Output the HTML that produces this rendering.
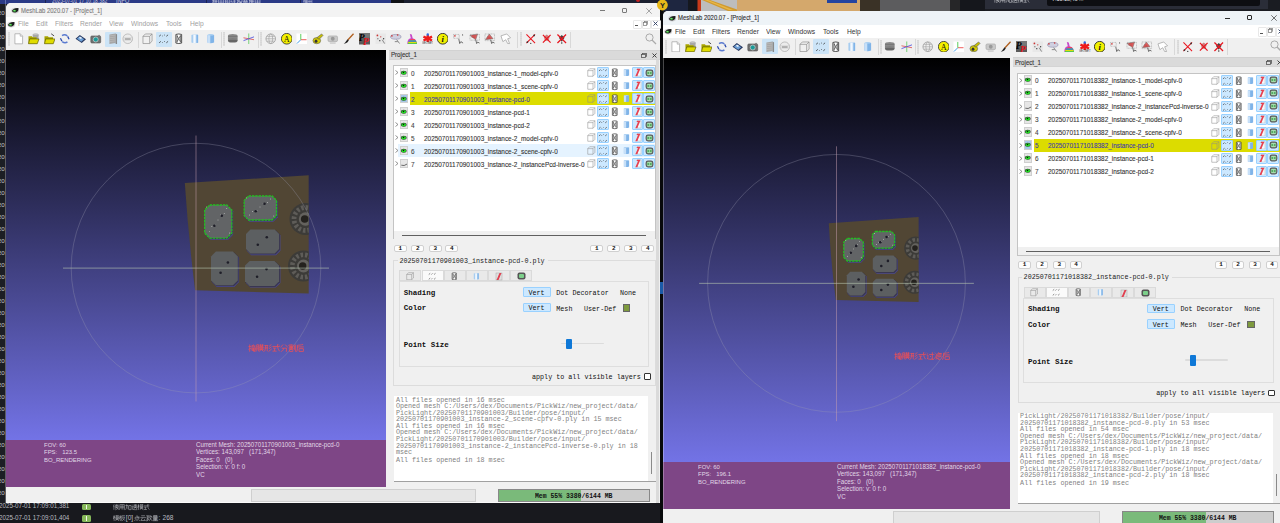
<!DOCTYPE html><html><head><meta charset="utf-8"><style>html,body{margin:0;padding:0;width:1280px;height:523px;overflow:hidden;background:#17191e;position:relative}.s,.m{position:absolute;white-space:pre}.s{font-family:"Liberation Sans", sans-serif}.m{font-family:"Liberation Mono", monospace}svg{display:block}</style></head><body>
<div style="position:absolute;left:0px;top:0px;width:391px;height:4px;background:#2b3a86;"></div>
<div style="position:absolute;left:391px;top:0px;width:13px;height:4px;background:#101216;"></div>
<div style="position:absolute;left:404px;top:0px;width:259px;height:4px;background:#1b2030;"></div>
<div class="s" style="left:52px;top:-3.43px;height:8.45px;line-height:8.45px;font-size:6.5px;color:#c8cbe0;font-weight:normal;transform:scaleX(0.76);transform-origin:0 0;">2025-07-01 17:10:18,382</div>
<div style="position:absolute;left:44.5px;top:0px;width:0.8px;height:4px;background:#1c2450;"></div>
<div style="position:absolute;left:206px;top:0px;width:0.8px;height:4px;background:#1c2450;"></div>
<div style="position:absolute;left:300px;top:0px;width:0.8px;height:4px;background:#1c2450;"></div>
<div class="s" style="left:116px;top:-3.43px;height:8.45px;line-height:8.45px;font-size:6.5px;color:#c8cbe0;font-weight:normal;transform:scaleX(0.85);transform-origin:0 0;">INFO</div>
<svg style="position:absolute;left:212px;top:-1.5px" width="50" height="7"><path transform="translate(0.00,0) scale(0.968)" d="M0.3 1.5h2M1.3 0.3v5.7M0.2 3.5l2-1M2.8 1h3M2.8 2.8h3M4.3 0.3v5.7M3 4.6h2.8M3 1v4" stroke="#c8cbe0" stroke-width="0.62" fill="none"/><path transform="translate(6.10,0) scale(0.968)" d="M0.5 0.8h5M0.5 0.8v5.2M5.5 0.8v5.2M0.5 3.2h5M0.5 5.4h5M3 0.8v5.2" stroke="#c8cbe0" stroke-width="0.62" fill="none"/><path transform="translate(12.20,0) scale(0.968)" d="M0.3 1h2.2M1.5 0.3v5.5M0.3 3h2.5M3.2 0.8h2.6v5M3.2 0.8v5M3.2 3.2h2.6M3.2 5.5h2.6" stroke="#c8cbe0" stroke-width="0.62" fill="none"/><path transform="translate(18.30,0) scale(0.968)" d="M0.5 0.5l1 1M0.3 2.5h1.5v3M2.5 1h3.3M4.2 0.3v5.7M2.5 3h3.3M2.8 5.5h3" stroke="#c8cbe0" stroke-width="0.62" fill="none"/><path transform="translate(24.40,0) scale(0.968)" d="M0.3 1.2h2.4M1.5 0.3v5.5M0.2 4l2.5-1.5M3 0.6h2.8v2.3H3zM3 3.6h2.8M4.4 2.9v3M3 5.6h2.9" stroke="#c8cbe0" stroke-width="0.62" fill="none"/><path transform="translate(30.50,0) scale(0.968)" d="M0.4 1h5.2M0.4 2.6h5.2M2 0.3v2.5M4 0.3v2.5M0.8 3.8h4.4v2H0.8zM3 3.8v2" stroke="#c8cbe0" stroke-width="0.62" fill="none"/><path transform="translate(36.60,0) scale(0.968)" d="M0.3 1.5h2M1.3 0.3v5.7M0.2 3.5l2-1M2.8 1h3M2.8 2.8h3M4.3 0.3v5.7M3 4.6h2.8M3 1v4" stroke="#c8cbe0" stroke-width="0.62" fill="none"/><path transform="translate(42.70,0) scale(0.968)" d="M0.5 0.8h5M0.5 0.8v5.2M5.5 0.8v5.2M0.5 3.2h5M0.5 5.4h5M3 0.8v5.2" stroke="#c8cbe0" stroke-width="0.62" fill="none"/></svg>
<svg style="position:absolute;left:303px;top:-1.0px" width="10" height="6"><path transform="translate(0.00,0) scale(0.806)" d="M0.3 1.5h2M1.3 0.3v5.7M0.2 3.5l2-1M2.8 1h3M2.8 2.8h3M4.3 0.3v5.7M3 4.6h2.8M3 1v4" stroke="#c8cbe0" stroke-width="0.62" fill="none"/><path transform="translate(4.50,0) scale(0.806)" d="M0.5 0.8h5M0.5 0.8v5.2M5.5 0.8v5.2M0.5 3.2h5M0.5 5.4h5M3 0.8v5.2" stroke="#c8cbe0" stroke-width="0.62" fill="none"/></svg>
<div style="position:absolute;left:5px;top:0px;width:1px;height:4px;background:#6070b0;"></div>
<div style="position:absolute;left:636px;top:0px;width:4px;height:2px;background:#c02020;border-radius:0 0 2px 2px;"></div>
<div style="position:absolute;left:0px;top:4px;width:6px;height:500px;background:#1c1e24;"></div>
<div class="s" style="left:-2.2px;top:8.97px;height:8.06px;line-height:8.06px;font-size:6.2px;color:#c4c6cc;font-weight:normal;">20</div>
<div class="s" style="left:-2.2px;top:20.97px;height:8.06px;line-height:8.06px;font-size:6.2px;color:#c4c6cc;font-weight:normal;">20</div>
<div class="s" style="left:-2.2px;top:32.97px;height:8.06px;line-height:8.06px;font-size:6.2px;color:#c4c6cc;font-weight:normal;">20</div>
<div class="s" style="left:-2.2px;top:44.97px;height:8.06px;line-height:8.06px;font-size:6.2px;color:#c4c6cc;font-weight:normal;">20</div>
<div class="s" style="left:-2.2px;top:56.97px;height:8.06px;line-height:8.06px;font-size:6.2px;color:#c4c6cc;font-weight:normal;">20</div>
<div class="s" style="left:-2.2px;top:68.97px;height:8.06px;line-height:8.06px;font-size:6.2px;color:#c4c6cc;font-weight:normal;">20</div>
<div class="s" style="left:-2.2px;top:80.97px;height:8.06px;line-height:8.06px;font-size:6.2px;color:#c4c6cc;font-weight:normal;">20</div>
<div class="s" style="left:-2.2px;top:92.97px;height:8.06px;line-height:8.06px;font-size:6.2px;color:#c4c6cc;font-weight:normal;">20</div>
<div class="s" style="left:-2.2px;top:104.97px;height:8.06px;line-height:8.06px;font-size:6.2px;color:#c4c6cc;font-weight:normal;">20</div>
<div class="s" style="left:-2.2px;top:116.97px;height:8.06px;line-height:8.06px;font-size:6.2px;color:#c4c6cc;font-weight:normal;">20</div>
<div class="s" style="left:-2.2px;top:128.97px;height:8.06px;line-height:8.06px;font-size:6.2px;color:#c4c6cc;font-weight:normal;">20</div>
<div class="s" style="left:-2.2px;top:140.97px;height:8.06px;line-height:8.06px;font-size:6.2px;color:#c4c6cc;font-weight:normal;">20</div>
<div class="s" style="left:-2.2px;top:152.97px;height:8.06px;line-height:8.06px;font-size:6.2px;color:#c4c6cc;font-weight:normal;">20</div>
<div class="s" style="left:-2.2px;top:164.97px;height:8.06px;line-height:8.06px;font-size:6.2px;color:#c4c6cc;font-weight:normal;">20</div>
<div class="s" style="left:-2.2px;top:176.97px;height:8.06px;line-height:8.06px;font-size:6.2px;color:#c4c6cc;font-weight:normal;">20</div>
<div class="s" style="left:-2.2px;top:188.97px;height:8.06px;line-height:8.06px;font-size:6.2px;color:#c4c6cc;font-weight:normal;">20</div>
<div class="s" style="left:-2.2px;top:200.97px;height:8.06px;line-height:8.06px;font-size:6.2px;color:#c4c6cc;font-weight:normal;">20</div>
<div class="s" style="left:-2.2px;top:212.97px;height:8.06px;line-height:8.06px;font-size:6.2px;color:#c4c6cc;font-weight:normal;">20</div>
<div class="s" style="left:-2.2px;top:224.97px;height:8.06px;line-height:8.06px;font-size:6.2px;color:#c4c6cc;font-weight:normal;">20</div>
<div class="s" style="left:-2.2px;top:236.97px;height:8.06px;line-height:8.06px;font-size:6.2px;color:#c4c6cc;font-weight:normal;">20</div>
<div class="s" style="left:-2.2px;top:248.97px;height:8.06px;line-height:8.06px;font-size:6.2px;color:#c4c6cc;font-weight:normal;">20</div>
<div class="s" style="left:-2.2px;top:260.97px;height:8.06px;line-height:8.06px;font-size:6.2px;color:#c4c6cc;font-weight:normal;">20</div>
<div class="s" style="left:-2.2px;top:272.97px;height:8.06px;line-height:8.06px;font-size:6.2px;color:#c4c6cc;font-weight:normal;">20</div>
<div class="s" style="left:-2.2px;top:284.97px;height:8.06px;line-height:8.06px;font-size:6.2px;color:#c4c6cc;font-weight:normal;">20</div>
<div class="s" style="left:-2.2px;top:296.97px;height:8.06px;line-height:8.06px;font-size:6.2px;color:#c4c6cc;font-weight:normal;">20</div>
<div class="s" style="left:-2.2px;top:308.97px;height:8.06px;line-height:8.06px;font-size:6.2px;color:#c4c6cc;font-weight:normal;">20</div>
<div class="s" style="left:-2.2px;top:320.97px;height:8.06px;line-height:8.06px;font-size:6.2px;color:#c4c6cc;font-weight:normal;">20</div>
<div class="s" style="left:-2.2px;top:332.97px;height:8.06px;line-height:8.06px;font-size:6.2px;color:#c4c6cc;font-weight:normal;">20</div>
<div class="s" style="left:-2.2px;top:344.97px;height:8.06px;line-height:8.06px;font-size:6.2px;color:#c4c6cc;font-weight:normal;">20</div>
<div class="s" style="left:-2.2px;top:356.97px;height:8.06px;line-height:8.06px;font-size:6.2px;color:#c4c6cc;font-weight:normal;">20</div>
<div class="s" style="left:-2.2px;top:368.97px;height:8.06px;line-height:8.06px;font-size:6.2px;color:#c4c6cc;font-weight:normal;">20</div>
<div class="s" style="left:-2.2px;top:380.97px;height:8.06px;line-height:8.06px;font-size:6.2px;color:#c4c6cc;font-weight:normal;">20</div>
<div class="s" style="left:-2.2px;top:392.97px;height:8.06px;line-height:8.06px;font-size:6.2px;color:#c4c6cc;font-weight:normal;">20</div>
<div class="s" style="left:-2.2px;top:404.97px;height:8.06px;line-height:8.06px;font-size:6.2px;color:#c4c6cc;font-weight:normal;">20</div>
<div class="s" style="left:-2.2px;top:416.97px;height:8.06px;line-height:8.06px;font-size:6.2px;color:#c4c6cc;font-weight:normal;">20</div>
<div class="s" style="left:-2.2px;top:428.97px;height:8.06px;line-height:8.06px;font-size:6.2px;color:#c4c6cc;font-weight:normal;">20</div>
<div class="s" style="left:-2.2px;top:440.97px;height:8.06px;line-height:8.06px;font-size:6.2px;color:#c4c6cc;font-weight:normal;">20</div>
<div class="s" style="left:-2.2px;top:452.97px;height:8.06px;line-height:8.06px;font-size:6.2px;color:#c4c6cc;font-weight:normal;">20</div>
<div class="s" style="left:-2.2px;top:464.97px;height:8.06px;line-height:8.06px;font-size:6.2px;color:#c4c6cc;font-weight:normal;">20</div>
<div class="s" style="left:-2.2px;top:476.97px;height:8.06px;line-height:8.06px;font-size:6.2px;color:#c4c6cc;font-weight:normal;">20</div>
<div class="s" style="left:-2.2px;top:488.97px;height:8.06px;line-height:8.06px;font-size:6.2px;color:#c4c6cc;font-weight:normal;">20</div>
<div style="position:absolute;left:5px;top:4px;width:1px;height:499px;background:#9a9ca4;opacity:0.5;"></div>
<div style="position:absolute;left:0px;top:503px;width:663px;height:20px;background:#18191e;"></div>
<div class="s" style="left:-1.5px;top:502.31px;height:8.58px;line-height:8.58px;font-size:6.6px;color:#b8bac0;font-weight:normal;transform:scaleX(0.95);transform-origin:0 0;">2025-07-01 17:09:01,381</div>
<div style="position:absolute;left:82px;top:504px;width:8.6px;height:5.7px;background:#86b85a;border-radius:1.5px;"></div>
<div style="position:absolute;left:85.8px;top:505px;width:1px;height:3.7px;background:#f0f6e8;"></div>
<div class="s" style="left:-1.5px;top:514.11px;height:8.58px;line-height:8.58px;font-size:6.6px;color:#b8bac0;font-weight:normal;transform:scaleX(0.95);transform-origin:0 0;">2025-07-01 17:09:01,404</div>
<div style="position:absolute;left:82px;top:514.5px;width:8.6px;height:7.5px;background:#86b85a;border-radius:1.5px;"></div>
<div style="position:absolute;left:85.8px;top:515.5px;width:1px;height:5.5px;background:#f0f6e8;"></div>
<svg style="position:absolute;left:113.3px;top:503.6px" width="39" height="7"><path transform="translate(0.00,0) scale(0.750)" d="M1.5 0.5l-1.2 3M1.2 2.5v5.3M2.5 1.5h5.3M5 0.3v4.5M3 2.5h4v2h-4zM3 6l2-1.5 2.5 3M7.5 5.5l-4.5 2.3" stroke="#b0b2b8" stroke-width="0.75" fill="none"/><path transform="translate(6.10,0) scale(0.750)" d="M1 0.8h6v6.7l-0.8-0.3M1 0.8v4c0 1.5-0.3 2.5-0.8 3M1 3h6M1 5h6M4 0.8v6.8" stroke="#b0b2b8" stroke-width="0.75" fill="none"/><path transform="translate(12.20,0) scale(0.750)" d="M0.3 2h3.5v5M2 0.3v2.5c0 2-0.8 4-1.7 5M4.8 2h3v5.5h-3z" stroke="#b0b2b8" stroke-width="0.75" fill="none"/><path transform="translate(18.30,0) scale(0.750)" d="M3 1.3h4.8M5.3 0.3v5M3.3 2.5h4v2h-4zM3 6.5l2.3-2 2.5 2M0.8 0.8l0.8 0.7M0.3 3h1.5v3l-1 1M0.8 6.5c1.5 1 4 1.2 7.2 1" stroke="#b0b2b8" stroke-width="0.75" fill="none"/><path transform="translate(24.40,0) scale(0.750)" d="M0.3 2.3h2.5M1.5 0.3v7.5M1.5 2.5l-1.2 3M1.5 3l1 1.2M3.3 1.2h4.5M4.5 0.3v1.8M6.6 0.3v1.8M3.8 2.6h3.4v2.2h-3.4zM3.8 3.7h3.4M3.3 5.7h4.5M5.5 4.8l-2 2.9M5.5 5.7l2.3 2" stroke="#b0b2b8" stroke-width="0.75" fill="none"/><path transform="translate(30.50,0) scale(0.750)" d="M0.3 2.5h7.5M5.5 0.3c0 3 0.5 5.5 2.3 7.2M6.8 0.6l0.8 0.8M0.8 4.2h3.4M2.5 4.2v3M0.3 7.3h4.3" stroke="#b0b2b8" stroke-width="0.75" fill="none"/></svg>
<svg style="position:absolute;left:113.3px;top:515.4px" width="14" height="7"><path transform="translate(0.00,0) scale(0.750)" d="M0.3 2.3h2.5M1.5 0.3v7.5M1.5 2.5l-1.2 3M1.5 3l1 1.2M3.3 1.2h4.5M4.5 0.3v1.8M6.6 0.3v1.8M3.8 2.6h3.4v2.2h-3.4zM3.8 3.7h3.4M3.3 5.7h4.5M5.5 4.8l-2 2.9M5.5 5.7l2.3 2" stroke="#b0b2b8" stroke-width="0.75" fill="none"/><path transform="translate(6.10,0) scale(0.750)" d="M0.3 2.3h2.5M1.5 0.3v7.5M1.5 2.5l-1.2 3M1.5 3l1 1.2M3.5 1h4.3M3.5 1v3.5c0 1.5-0.5 2.7-1 3.3M4 3h3.5c-0.5 2-2 3.8-3.8 4.8M4.5 4l3.3 3.5" stroke="#b0b2b8" stroke-width="0.75" fill="none"/></svg>
<div class="s" style="left:125.8px;top:514.11px;height:8.58px;line-height:8.58px;font-size:6.6px;color:#b8bac0;font-weight:normal;">[0]</div>
<svg style="position:absolute;left:134px;top:515.4px" width="26" height="7"><path transform="translate(0.00,0) scale(0.750)" d="M4 0.3v2.5h3.5M1.5 3h5v2.5h-5zM0.5 6.8l0.5 1M2.8 6.8l0.3 1M4.8 6.8l0.3 1M7 6.8l0.7 1" stroke="#b0b2b8" stroke-width="0.75" fill="none"/><path transform="translate(6.10,0) scale(0.750)" d="M1.5 1h5M0.3 3.5h7.5M3.5 3.5l-2.5 3.8h6M5.5 5.5l1.5 2" stroke="#b0b2b8" stroke-width="0.75" fill="none"/><path transform="translate(12.20,0) scale(0.750)" d="M0.5 1.5h3.5M2.2 0.3v3.5M0.5 0.5l0.8 1M4 0.5l-0.8 1M0.3 3.8h4M2 4l-1.5 3.8M0.8 5.5h3c-0.5 1.3-2 2.2-3.3 2.5M5.5 0.3l-1 3M5 1.8h2.8M7 1.8c-0.5 2.5-1.5 4.5-3 6M4.8 3.5l3 4.3" stroke="#b0b2b8" stroke-width="0.75" fill="none"/><path transform="translate(18.30,0) scale(0.750)" d="M1.8 0.5h4.5v2h-4.5zM1.8 1.5h4.5M0.3 3h7.5M1.8 3.8h4.5v2h-4.5zM1.8 4.8h4.5M4 3.8v4M1 6.5h6M0.3 7.6h7.5" stroke="#b0b2b8" stroke-width="0.75" fill="none"/></svg>
<div class="s" style="left:158.5px;top:514.11px;height:8.58px;line-height:8.58px;font-size:6.6px;color:#b8bac0;font-weight:normal;">:</div>
<div class="s" style="left:162.5px;top:514.11px;height:8.58px;line-height:8.58px;font-size:6.6px;color:#b8bac0;font-weight:normal;">268</div>
<div style="position:absolute;left:660px;top:0px;width:3px;height:523px;background:#08090b;"></div>
<div style="position:absolute;left:660px;top:282px;width:3px;height:12px;background:#1a5aa8;"></div>
<div style="position:absolute;left:663px;top:0px;width:617px;height:11px;background:#1e2640;"></div>
<div style="position:absolute;left:687.5px;top:0px;width:10px;height:11px;background:#15181f;"></div>
<svg style="position:absolute;left:697px;top:0" width="263" height="11"><path d="M0.5 0h5v11h-5z" fill="#c83a1a"/><path d="M4 0h36v11h-36z" fill="#bdbdbd"/><path d="M5 0h8l27 9.5v1.5h-9z" fill="#d09a30"/><path d="M8 0h3l25 10h-4z" fill="#e8b848"/><path d="M40 0h123v11h-123z" fill="#d4a86c"/><path d="M130 0h30v3h-30z" fill="#2444a0"/><path d="M163 0h20v11h-20z" fill="#3a3226"/><path d="M183 0h70v11h-70z" fill="#5c5c5e"/><path d="M253 0h10v11h-10z" fill="#262628"/></svg>
<div style="position:absolute;left:960px;top:0px;width:25px;height:11px;background:#15171c;"></div>
<div style="position:absolute;left:985px;top:0px;width:295px;height:11px;background:#2a2d38;"></div>
<div style="position:absolute;left:1047px;top:0px;width:213px;height:5.5px;background:#0d0e12;border-radius:0 0 2px 2px;"></div>
<div style="position:absolute;left:1268px;top:0px;width:12px;height:11px;background:#1a1c22;"></div>
<div style="position:absolute;left:985px;top:9px;width:295px;height:2px;background:#1a1c22;"></div>
<svg style="position:absolute;left:994px;top:-2.6px" width="37" height="7"><path transform="translate(0.00,0) scale(0.725)" d="M1.5 0.5l-1.2 3M1.2 2.5v5.3M2.5 1.5h5.3M5 0.3v4.5M3 2.5h4v2h-4zM3 6l2-1.5 2.5 3M7.5 5.5l-4.5 2.3" stroke="#c0c2c8" stroke-width="0.8" fill="none"/><path transform="translate(5.90,0) scale(0.725)" d="M1 0.8h6v6.7l-0.8-0.3M1 0.8v4c0 1.5-0.3 2.5-0.8 3M1 3h6M1 5h6M4 0.8v6.8" stroke="#c0c2c8" stroke-width="0.8" fill="none"/><path transform="translate(11.80,0) scale(0.725)" d="M0.3 2h3.5v5M2 0.3v2.5c0 2-0.8 4-1.7 5M4.8 2h3v5.5h-3z" stroke="#c0c2c8" stroke-width="0.8" fill="none"/><path transform="translate(17.70,0) scale(0.725)" d="M3 1.3h4.8M5.3 0.3v5M3.3 2.5h4v2h-4zM3 6.5l2.3-2 2.5 2M0.8 0.8l0.8 0.7M0.3 3h1.5v3l-1 1M0.8 6.5c1.5 1 4 1.2 7.2 1" stroke="#c0c2c8" stroke-width="0.8" fill="none"/><path transform="translate(23.60,0) scale(0.725)" d="M0.3 2.3h2.5M1.5 0.3v7.5M1.5 2.5l-1.2 3M1.5 3l1 1.2M3.3 1.2h4.5M4.5 0.3v1.8M6.6 0.3v1.8M3.8 2.6h3.4v2.2h-3.4zM3.8 3.7h3.4M3.3 5.7h4.5M5.5 4.8l-2 2.9M5.5 5.7l2.3 2" stroke="#c0c2c8" stroke-width="0.8" fill="none"/><path transform="translate(29.50,0) scale(0.725)" d="M0.3 2.5h7.5M5.5 0.3c0 3 0.5 5.5 2.3 7.2M6.8 0.6l0.8 0.8M0.8 4.2h3.4M2.5 4.2v3M0.3 7.3h4.3" stroke="#c0c2c8" stroke-width="0.8" fill="none"/></svg>
<div class="s" style="left:1052px;top:-3.70px;height:7.80px;line-height:7.80px;font-size:6px;color:#e8e8ec;font-weight:normal;transform:scaleX(0.9);transform-origin:0 0;">7:10:18,43 ...</div>
<div style="position:absolute;left:6px;top:3px;width:654px;height:500px;background:#f0f0f0;border-radius:5px 5px 0 0;overflow:hidden;"></div>
<div style="position:absolute;left:6px;top:3px;width:654px;height:14px;background:#f3f3f3;border-radius:5px 5px 0 0;"></div>
<svg style="position:absolute;left:10.6px;top:6.2px" width="8.5" height="8.5" viewBox="0 0 12 12"><ellipse cx="6" cy="6.5" rx="5.6" ry="4" fill="#aaa" opacity="0.45"/><path d="M1.2 7 Q4 2.2 10.8 3 Q11 7 7.5 8.8 Q3.5 10 1.2 7Z" fill="#1e1e1e"/><ellipse cx="5" cy="6.8" rx="2.2" ry="1.4" fill="#3fbf3f"/><ellipse cx="4.5" cy="6.6" rx="0.9" ry="0.6" fill="#b8f0b8"/></svg>
<div class="s" style="left:20.5px;top:5.96px;height:9.88px;line-height:9.88px;font-size:7.6px;color:#7a7a7a;font-weight:normal;transform:scaleX(0.78);transform-origin:0 0;-webkit-text-stroke:0.12px #7a7a7a;">MeshLab 2020.07 - [Project_1]</div>
<div style="position:absolute;left:599.5px;top:10px;width:5.5px;height:0.8px;background:#7a7a7a;"></div>
<div style="position:absolute;left:622.2px;top:7.6px;width:5.2px;height:5.2px;border:0.6px solid #7a7a7a;border-radius:1px;box-sizing:border-box;"></div>
<svg style="position:absolute;left:645.5px;top:7.5px;" width="6" height="6" viewBox="0 0 6 6"><path d="M0.3 0.3L5.7 5.7M5.7 0.3L0.3 5.7" stroke="#7a7a7a" stroke-width="0.65"/></svg>
<div style="position:absolute;left:6px;top:17px;width:654px;height:13px;background:#fff;"></div>
<svg style="position:absolute;left:7.1px;top:19.6px" width="8.5" height="8.5" viewBox="0 0 12 12"><ellipse cx="6" cy="6.5" rx="5.6" ry="4" fill="#aaa" opacity="0.45"/><path d="M1.2 7 Q4 2.2 10.8 3 Q11 7 7.5 8.8 Q3.5 10 1.2 7Z" fill="#1e1e1e"/><ellipse cx="5" cy="6.8" rx="2.2" ry="1.4" fill="#3fbf3f"/><ellipse cx="4.5" cy="6.6" rx="0.9" ry="0.6" fill="#b8f0b8"/></svg>
<div class="s" style="left:17.9px;top:19.32px;height:9.36px;line-height:9.36px;font-size:7.2px;color:#a0a0a0;font-weight:normal;transform:scaleX(0.93);transform-origin:0 0;">File</div>
<div class="s" style="left:35.6px;top:19.32px;height:9.36px;line-height:9.36px;font-size:7.2px;color:#a0a0a0;font-weight:normal;transform:scaleX(0.93);transform-origin:0 0;">Edit</div>
<div class="s" style="left:54.7px;top:19.32px;height:9.36px;line-height:9.36px;font-size:7.2px;color:#a0a0a0;font-weight:normal;transform:scaleX(0.93);transform-origin:0 0;">Filters</div>
<div class="s" style="left:80px;top:19.32px;height:9.36px;line-height:9.36px;font-size:7.2px;color:#a0a0a0;font-weight:normal;transform:scaleX(0.93);transform-origin:0 0;">Render</div>
<div class="s" style="left:109px;top:19.32px;height:9.36px;line-height:9.36px;font-size:7.2px;color:#a0a0a0;font-weight:normal;transform:scaleX(0.93);transform-origin:0 0;">View</div>
<div class="s" style="left:131px;top:19.32px;height:9.36px;line-height:9.36px;font-size:7.2px;color:#a0a0a0;font-weight:normal;transform:scaleX(0.93);transform-origin:0 0;">Windows</div>
<div class="s" style="left:166px;top:19.32px;height:9.36px;line-height:9.36px;font-size:7.2px;color:#a0a0a0;font-weight:normal;transform:scaleX(0.93);transform-origin:0 0;">Tools</div>
<div class="s" style="left:190px;top:19.32px;height:9.36px;line-height:9.36px;font-size:7.2px;color:#a0a0a0;font-weight:normal;transform:scaleX(0.93);transform-origin:0 0;">Help</div>
<div style="position:absolute;left:632.7px;top:19.6px;width:7.5px;height:7.5px;background:#fff;border:0.5px solid #e8e8e8;border-radius:1px;"></div>
<div style="position:absolute;left:641.6px;top:19.6px;width:7.5px;height:7.5px;background:#fff;border:0.5px solid #e8e8e8;border-radius:1px;"></div>
<div style="position:absolute;left:651.3px;top:19.6px;width:7.5px;height:7.5px;background:#fff;border:0.5px solid #e8e8e8;border-radius:1px;"></div>
<div style="position:absolute;left:634.7px;top:25.2px;width:3px;height:0.8px;background:#555;"></div>
<svg style="position:absolute;left:643.1px;top:20.9px;" width="5" height="5" viewBox="0 0 5 5"><rect x="1.3" y="0.5" width="3.2" height="3" fill="none" stroke="#777" stroke-width="0.7"/><rect x="0.5" y="1.5" width="3.2" height="3" fill="#fff" stroke="#777" stroke-width="0.7"/></svg>
<svg style="position:absolute;left:652.9px;top:21px;" width="5" height="5" viewBox="0 0 5 5"><path d="M0.5 0.5L4.5 4.5M4.5 0.5L0.5 4.5" stroke="#2a3a60" stroke-width="0.9"/></svg>
<div style="position:absolute;left:6px;top:30px;width:654px;height:20px;background:#f0f0f0;"></div>
<svg style="position:absolute;left:12.75px;top:33.4px" width="11.5" height="11.5" viewBox="0 0 12 12"><path d="M2 0.8h5.5l2.5 2.5v8h-8z" fill="#fff" stroke="#9a9a9a" stroke-width="0.7"/><path d="M7.5 0.8v2.5h2.5" fill="#e8e8e8" stroke="#9a9a9a" stroke-width="0.6"/></svg>
<svg style="position:absolute;left:28.25px;top:33.4px" width="11.5" height="11.5" viewBox="0 0 12 12"><ellipse cx="8" cy="2" rx="3" ry="1.3" fill="#c8c8c8" stroke="#888" stroke-width="0.4"/><rect x="5" y="2" width="6" height="4.5" fill="#a8a8a8"/><path d="M0.5 3.5h3.5l1 1h4v6.5h-8.5z" fill="#a8a400"/><path d="M1.8 6.2h9.7l-1.8 5h-9.2z" fill="#e0dc00" stroke="#4a4800" stroke-width="0.6"/></svg>
<svg style="position:absolute;left:43.65px;top:33.4px" width="11.5" height="11.5" viewBox="0 0 12 12"><path d="M0.5 3.5h3.5l1 1h4.5v6.5h-9z" fill="#a8a400"/><path d="M1.8 6.2h9.7l-1.8 5h-9.2z" fill="#e0dc00" stroke="#4a4800" stroke-width="0.6"/><path d="M7.5 0.8l3 2.2" stroke="#333" stroke-width="0.9"/></svg>
<svg style="position:absolute;left:59.05px;top:33.4px" width="11.5" height="11.5" viewBox="0 0 12 12"><path d="M3.2 2.8q2.5-2 5.5 0.2" fill="none" stroke="#5a7ad0" stroke-width="1.5"/><path d="M8.8 9.2q-2.5 2-5.5-0.2" fill="none" stroke="#5a7ad0" stroke-width="1.5"/><path d="M9 3.5l1.5 3" stroke="#2a4ab0" stroke-width="1.3"/><path d="M3 8.5l-1.5-3" stroke="#2a4ab0" stroke-width="1.3"/></svg>
<svg style="position:absolute;left:75.05px;top:33.4px" width="11.5" height="11.5" viewBox="0 0 12 12"><path d="M0.5 6l4.5-4 6.5 4.5-4.5 4z" fill="#2a3a60" /><path d="M2 6l3-2.6 4.5 3-3 2.6z" fill="#6ca0d8"/><path d="M4 5l1.5-1.2 2 1.3-1.5 1.2z" fill="#e8f0f8"/></svg>
<svg style="position:absolute;left:90.25px;top:33.4px" width="11.5" height="11.5" viewBox="0 0 12 12"><rect x="0.8" y="3" width="10.4" height="7.5" rx="1.2" fill="#707070" stroke="#444" stroke-width="0.5"/><rect x="8.5" y="2" width="2" height="1.5" fill="#888"/><circle cx="6" cy="6.8" r="2.6" fill="#1a9a98" stroke="#d8d8d8" stroke-width="0.7"/></svg>
<div style="position:absolute;left:104.5px;top:31.5px;width:16.2px;height:15.3px;background:#cce4f7;border-radius:1px;"></div>
<svg style="position:absolute;left:106.75px;top:33.4px" width="11.5" height="11.5" viewBox="0 0 12 12"><path d="M2.5 1.5l6.5-1v10l-6.5 1z" fill="#a6a6a6"/><path d="M2.5 3l6.5-0.8M2.5 5l6.5-0.8M2.5 7l6.5-0.8M2.5 9l6.5-0.8" stroke="#c8c8c8" stroke-width="0.5"/><path d="M9 0.5l1.5 1v10l-1.5 0z" fill="#8a8a8a"/></svg>
<svg style="position:absolute;left:122.25px;top:33.4px" width="11.5" height="11.5" viewBox="0 0 12 12"><circle cx="6" cy="6" r="5" fill="#ececec" stroke="#aaa" stroke-width="0.7"/><path d="M1.2 5h9.6M1.2 7.5h9.6" stroke="#c0c0c0" stroke-width="0.5"/><rect x="3" y="5.3" width="6" height="2" fill="#b0b0b0"/></svg>
<svg style="position:absolute;left:141.95px;top:33.4px" width="11.5" height="11.5" viewBox="0 0 12 12"><path d="M1 3.5h7v7.5h-7z M1 3.5l2.5-2.5h7l-2.5 2.5 M8 11l2.5-2.5v-7.5" fill="none" stroke="#8a8a8a" stroke-width="0.7"/></svg>
<div style="position:absolute;left:155.8px;top:31.5px;width:16.2px;height:15.3px;background:#cce4f7;border-radius:1px;"></div>
<svg style="position:absolute;left:158.05px;top:33.4px" width="11.5" height="11.5" viewBox="0 0 12 12"><g stroke="#333" stroke-width="0.8" stroke-linecap="round"><path d="M1.5 3.2l1.2-1M9 3.2l1.2-1M1.5 10l1.2-1M9 10l1.2-1"/></g><g fill="#333"><circle cx="4.6" cy="3" r="0.5"/><circle cx="6.8" cy="2" r="0.5"/><circle cx="4.6" cy="9.8" r="0.5"/><circle cx="6.8" cy="8.8" r="0.5"/></g></svg>
<svg style="position:absolute;left:173.05px;top:33.4px" width="11.5" height="11.5" viewBox="0 0 12 12"><path d="M3 1.5q3-1 6 0v9q-3 1-6 0z" fill="#fff" stroke="#222" stroke-width="0.8"/><path d="M4.3 2.2v7.6M7.7 2.2v7.6M4.3 3l1.7 3 1.7-3M4.3 9l1.7-3 1.7 3" fill="none" stroke="#222" stroke-width="0.6"/></svg>
<svg style="position:absolute;left:188.95px;top:33.4px" width="11.5" height="11.5" viewBox="0 0 12 12"><path d="M2.5 2q3.5-1.5 7 0v8q-3.5 1.5-7 0z" fill="#a8cdf0"/><path d="M4.5 1.6h2.5v9.2h-2.5z" fill="#f2f8fe"/><path d="M8 1.8h1.5v8.5h-1.5z" fill="#80b4e8"/></svg>
<svg style="position:absolute;left:204.55px;top:33.4px" width="11.5" height="11.5" viewBox="0 0 12 12"><path d="M2.5 2q3.5-1.5 7 0v8q-3.5 1.5-7 0z" fill="#80b4e8"/><path d="M2.5 2h3v8.5h-3z" fill="#c8e0f8"/><path d="M2.5 2q3.5-1.5 7 0q-3.5 1.2-7 0z" fill="#b0d4f4"/></svg>
<svg style="position:absolute;left:227.25px;top:33.4px" width="11.5" height="11.5" viewBox="0 0 12 12"><ellipse cx="6" cy="3" rx="5" ry="2" fill="#8a8a8a"/><rect x="1" y="3" width="10" height="5" fill="#777"/><ellipse cx="6" cy="8" rx="5" ry="2" fill="#666"/><path d="M1 5h10M1 6.5h10" stroke="#aaa" stroke-width="0.5"/></svg>
<svg style="position:absolute;left:243.45px;top:33.4px" width="11.5" height="11.5" viewBox="0 0 12 12"><path d="M6 0.5v11" stroke="#6c6" stroke-width="0.9"/><path d="M0.5 5l11 2" stroke="#d55" stroke-width="0.9"/><path d="M0.5 8l11-4" stroke="#55d" stroke-width="0.9"/></svg>
<svg style="position:absolute;left:264.55px;top:33.4px" width="11.5" height="11.5" viewBox="0 0 12 12"><circle cx="6" cy="6" r="5" fill="none" stroke="#999" stroke-width="0.8"/><ellipse cx="6" cy="6" rx="2" ry="5" fill="none" stroke="#999" stroke-width="0.6"/><path d="M1 6h10M2 3.5h8M2 8.5h8" stroke="#999" stroke-width="0.6"/></svg>
<svg style="position:absolute;left:280.65px;top:33.4px" width="11.5" height="11.5" viewBox="0 0 12 12"><circle cx="6" cy="6" r="5.6" fill="#f4f000" stroke="#222" stroke-width="0.8"/><text x="6" y="9.3" font-size="8.5" text-anchor="middle" fill="#111" font-family="Liberation Serif">A</text></svg>
<svg style="position:absolute;left:296.25px;top:33.4px" width="11.5" height="11.5" viewBox="0 0 12 12"><rect x="0.5" y="0.5" width="11" height="11" fill="#fff"/><path d="M5 7l-4 4" stroke="#3a9ae8" stroke-width="1"/><path d="M5 7h6" stroke="#e55" stroke-width="1"/><path d="M5 7v-6" stroke="#5c5" stroke-width="1"/></svg>
<svg style="position:absolute;left:312.05px;top:33.4px" width="11.5" height="11.5" viewBox="0 0 12 12"><ellipse cx="5" cy="8" rx="4" ry="3.2" fill="#d8d000" stroke="#555" stroke-width="0.6"/><path d="M5 5l5-4 1.5 1.5-4 4z" fill="#c8c000" stroke="#555" stroke-width="0.6"/><ellipse cx="4.2" cy="8.5" rx="1.5" ry="1.8" fill="#333"/></svg>
<svg style="position:absolute;left:327.45px;top:33.4px" width="11.5" height="11.5" viewBox="0 0 12 12"><rect x="1" y="3" width="10" height="6" rx="1.5" fill="#c8c8c8" stroke="#999" stroke-width="0.5"/><circle cx="6" cy="6" r="2" fill="#999"/><rect x="3" y="10" width="6" height="1" fill="#bbb"/></svg>
<svg style="position:absolute;left:342.95px;top:33.4px" width="11.5" height="11.5" viewBox="0 0 12 12"><path d="M11 0.8l-6 6.5" stroke="#b06020" stroke-width="1.4"/><path d="M5 6.5l-1.5 1.5q-1 2-2.8 3.2q2.5 0 4-1.5l1.3-2z" fill="#222"/></svg>
<svg style="position:absolute;left:358.75px;top:33.4px" width="11.5" height="11.5" viewBox="0 0 12 12"><rect x="0" y="0" width="12" height="12" fill="#5a5a5a"/><rect x="0" y="0" width="12" height="5" fill="#777"/><text x="-0.3" y="8.5" font-size="10" fill="#000" font-style="italic" font-weight="bold" font-family="Liberation Serif">P</text><text x="4.2" y="12" font-size="10" fill="#e8141e" font-style="italic" font-weight="bold" font-family="Liberation Serif">P</text></svg>
<svg style="position:absolute;left:374.75px;top:33.4px" width="11.5" height="11.5" viewBox="0 0 12 12"><rect x="0.5" y="0.5" width="11" height="11" fill="#e8e8e8"/><g fill="#c33"><circle cx="2.5" cy="2.5" r="0.9"/><circle cx="6" cy="4" r="0.7"/></g><g fill="#333"><circle cx="5" cy="8" r="0.7"/><circle cx="9" cy="6" r="0.7"/><circle cx="3" cy="6" r="0.6"/></g><path d="M7.5 7l2.5 4" stroke="#555" stroke-width="0.7"/></svg>
<svg style="position:absolute;left:390.25px;top:33.4px" width="11.5" height="11.5" viewBox="0 0 12 12"><ellipse cx="6" cy="4" rx="5.5" ry="2.5" fill="#d0d0e0" stroke="#8888a8" stroke-width="0.6"/><g fill="#c33"><circle cx="2" cy="3" r="0.8"/><circle cx="8" cy="2" r="0.8"/></g><path d="M7 7l3 4M5 9h3" stroke="#555" stroke-width="0.7"/></svg>
<svg style="position:absolute;left:405.75px;top:33.4px" width="11.5" height="11.5" viewBox="0 0 12 12"><path d="M1.5 11.5q-0.5-5 3.5-6l-1-4.5 2 0.5 1 4q4.5 1 4 6z" fill="#c848c8"/><path d="M1.8 11.5q0-3 2.5-4h5.5q1.7 1.5 1.7 4z" fill="#50c850"/><path d="M2.3 10h8.5" stroke="#f0e000" stroke-width="1"/><path d="M3 8.5h7.5" stroke="#4060ff" stroke-width="0.9"/><path d="M4.5 6.8h5" stroke="#ff4040" stroke-width="0.8"/></svg>
<svg style="position:absolute;left:421.95px;top:33.4px" width="11.5" height="11.5" viewBox="0 0 12 12"><path d="M6 2.2v7.3M1.5 3.8l9 4M10.5 3.8l-9 4" stroke="#ee1a1a" stroke-width="2.4"/><circle cx="6" cy="1.6" r="1.3" fill="#2a6ae0"/><text x="6" y="11.8" font-size="2.8" text-anchor="middle" fill="#333" font-family="Liberation Sans">GEOMET</text></svg>
<svg style="position:absolute;left:436.75px;top:33.4px" width="11.5" height="11.5" viewBox="0 0 12 12"><circle cx="6" cy="6" r="5.6" fill="#f0f000" stroke="#222" stroke-width="0.9"/><text x="6" y="9.5" font-size="9" text-anchor="middle" fill="#111" font-style="italic" font-weight="bold" font-family="Liberation Serif">i</text></svg>
<svg style="position:absolute;left:453.15px;top:33.4px" width="11.5" height="11.5" viewBox="0 0 12 12"><path d="M0.5 1.5h6v4h-6z" fill="none" stroke="#888" stroke-width="0.5" stroke-dasharray="1 0.6"/><circle cx="2" cy="3" r="0.8" fill="#c33"/><path d="M6 6l1 5 1.2-2 2.3 1.5" fill="none" stroke="#333" stroke-width="0.7"/><circle cx="10" cy="2" r="0.6" fill="#555"/></svg>
<svg style="position:absolute;left:468.55px;top:33.4px" width="11.5" height="11.5" viewBox="0 0 12 12"><path d="M1 2.5l8-1.5-2 6z" fill="#e06060" stroke="#666" stroke-width="0.5"/><path d="M3 3l4 0M2.5 4.5l4 0" stroke="#a03030" stroke-width="0.4"/><path d="M1 1.5h10v6h-10z" fill="none" stroke="#888" stroke-width="0.5" stroke-dasharray="1 0.6"/><path d="M7 7l1 4 1-1.5 2 1" fill="none" stroke="#333" stroke-width="0.7"/></svg>
<svg style="position:absolute;left:484.25px;top:33.4px" width="11.5" height="11.5" viewBox="0 0 12 12"><path d="M1.5 7l4-6 4 5z" fill="#e06060" stroke="#666" stroke-width="0.5"/><path d="M3.5 4l3 0.5M2.8 5.5l4 0" stroke="#a03030" stroke-width="0.4"/><path d="M1 1h10v7h-10z" fill="none" stroke="#888" stroke-width="0.5" stroke-dasharray="1 0.6"/><path d="M7 7l1 4 1-1.5 2 1" fill="none" stroke="#333" stroke-width="0.7"/></svg>
<svg style="position:absolute;left:500.05px;top:33.4px" width="11.5" height="11.5" viewBox="0 0 12 12"><path d="M1 3l6-2 4 4-3 1 2 5-2 0-2-4-3 2z" fill="#fff" stroke="#999" stroke-width="0.7"/></svg>
<svg style="position:absolute;left:524.75px;top:33.4px" width="11.5" height="11.5" viewBox="0 0 12 12"><path d="M1.5 1.5l9 9M10.5 1.5l-9 9" stroke="#e8141e" stroke-width="1.1"/><circle cx="2.5" cy="9.5" r="0.9" fill="#333"/><circle cx="9.5" cy="2.5" r="0.9" fill="#333"/><circle cx="6" cy="10.8" r="0.7" fill="#333"/></svg>
<svg style="position:absolute;left:541.05px;top:33.4px" width="11.5" height="11.5" viewBox="0 0 12 12"><path d="M3 4l3-2.5 3 2.5-1 4h-4z" fill="#c05050" opacity="0.7"/><path d="M2 2l8 8M10 2l-8 8" stroke="#e8141e" stroke-width="1.3"/></svg>
<svg style="position:absolute;left:556.05px;top:33.4px" width="11.5" height="11.5" viewBox="0 0 12 12"><path d="M3 5l3-3 3 3-3 4z" fill="#444"/><path d="M1.5 1.5l9 9M10.5 1.5l-9 9" stroke="#e8141e" stroke-width="1.3"/><circle cx="6" cy="10.5" r="0.8" fill="#333"/></svg>
<div style="position:absolute;left:137.5px;top:31.7px;width:0.8px;height:16px;background:#d8d8d8;"></div>
<div style="position:absolute;left:220.6px;top:31.7px;width:0.8px;height:16px;background:#d8d8d8;"></div>
<div style="position:absolute;left:257.6px;top:31.7px;width:0.8px;height:16px;background:#d8d8d8;"></div>
<div style="position:absolute;left:517px;top:31.7px;width:0.8px;height:16px;background:#d8d8d8;"></div>
<div style="position:absolute;left:570px;top:31.7px;width:0.8px;height:16px;background:#d8d8d8;"></div>
<svg style="position:absolute;left:8.0px;top:32.2px" width="2" height="15"><path d="M1 0.5v14" stroke="#8a8a8a" stroke-width="0.9" stroke-dasharray="0.9 1.1"/></svg>
<svg style="position:absolute;left:222.5px;top:32.2px" width="2" height="15"><path d="M1 0.5v14" stroke="#8a8a8a" stroke-width="0.9" stroke-dasharray="0.9 1.1"/></svg>
<svg style="position:absolute;left:260.0px;top:32.2px" width="2" height="15"><path d="M1 0.5v14" stroke="#8a8a8a" stroke-width="0.9" stroke-dasharray="0.9 1.1"/></svg>
<svg style="position:absolute;left:519.5px;top:32.2px" width="2" height="15"><path d="M1 0.5v14" stroke="#8a8a8a" stroke-width="0.9" stroke-dasharray="0.9 1.1"/></svg>
<svg style="position:absolute;left:645px;top:32.7px" width="12" height="12" viewBox="0 0 12 12"><circle cx="4.5" cy="4.5" r="3.6" fill="none" stroke="#aaa" stroke-width="1"/><path d="M7 7l4 4" stroke="#aaa" stroke-width="1.3"/></svg>
<div style="position:absolute;left:6px;top:50px;width:380px;height:437px;background:linear-gradient(#000000 0px, #7373e6 390px);"></div>
<div style="position:absolute;left:386px;top:50px;width:274px;height:437px;background:#f0f0f0;"></div>
<svg style="position:absolute;left:6px;top:50px" width="380" height="437"><defs><clipPath id="c6"><path d="M178.8 133.0 Q182.4 186.6 189.1 240.2 L302.7 243.6 L302.7 125.3Z"/></clipPath></defs><path d="M178.8 133.0 Q182.4 186.6 189.1 240.2 L302.7 243.6 L302.7 125.3Z" fill="#514634"/><g clip-path="url(#c6)"><path d="M204.5 156.2H222.1L227.1 161.2V184.8L222.1 189.8H204.5L199.5 184.8V161.2Z" fill="#4a4890"/><path d="M204.1 155.5H221.7L226.7 160.5V184.1L221.7 189.1H204.1L199.1 184.1V160.5Z" fill="#2e2c2a" opacity="0.6"/><path d="M203.7 155.0H220.8L225.8 160.0V183.1L220.8 188.1H203.7L198.7 183.1V160.0Z" fill="#626466" stroke="#22c022" stroke-width="1.3" stroke-dasharray="2.5 0.8"/><circle cx="200.7" cy="157.0" r="0.45" fill="#e8e8e8"/><circle cx="209.4" cy="175.1" r="0.45" fill="#e8e8e8"/><circle cx="218.2" cy="163.5" r="0.45" fill="#e8e8e8"/><circle cx="203.3" cy="181.6" r="0.45" fill="#e8e8e8"/><circle cx="212.0" cy="170.0" r="0.45" fill="#e8e8e8"/><circle cx="220.8" cy="158.5" r="0.45" fill="#e8e8e8"/><circle cx="205.9" cy="176.5" r="0.45" fill="#e8e8e8"/><circle cx="214.6" cy="165.0" r="0.45" fill="#e8e8e8"/><circle cx="223.4" cy="183.0" r="0.45" fill="#e8e8e8"/><circle cx="208.4" cy="175.8" r="1.3" fill="#1e1e28"/><circle cx="215.8" cy="165.8" r="1.3" fill="#1e1e28"/><path d="M243.4 147.2H267.4L271.8 151.6V167.3L267.4 171.7H243.4L239.0 167.3V151.6Z" fill="#4a4890"/><path d="M243.0 146.5H267.0L271.4 150.9V166.6L267.0 171.0H243.0L238.6 166.6V150.9Z" fill="#2e2c2a" opacity="0.6"/><path d="M242.6 146.0H266.1L270.5 150.4V165.6L266.1 170.0H242.6L238.2 165.6V150.4Z" fill="#626466" stroke="#22c022" stroke-width="1.3" stroke-dasharray="2.5 0.8"/><circle cx="240.2" cy="148.0" r="0.45" fill="#e8e8e8"/><circle cx="250.9" cy="160.5" r="0.45" fill="#e8e8e8"/><circle cx="261.5" cy="152.5" r="0.45" fill="#e8e8e8"/><circle cx="243.4" cy="165.0" r="0.45" fill="#e8e8e8"/><circle cx="254.0" cy="157.0" r="0.45" fill="#e8e8e8"/><circle cx="264.7" cy="149.0" r="0.45" fill="#e8e8e8"/><circle cx="246.5" cy="161.5" r="0.45" fill="#e8e8e8"/><circle cx="257.2" cy="153.5" r="0.45" fill="#e8e8e8"/><circle cx="267.8" cy="166.0" r="0.45" fill="#e8e8e8"/><circle cx="249.7" cy="161.2" r="1.3" fill="#1e1e28"/><circle cx="258.5" cy="153.8" r="1.3" fill="#1e1e28"/><path d="M245.2 180.7H270.0L274.4 185.1V200.8L270.0 205.2H245.2L240.8 200.8V185.1Z" fill="#4a4890"/><path d="M244.8 180.0H269.6L274.0 184.4V200.1L269.6 204.5H244.8L240.4 200.1V184.4Z" fill="#2e2c2a" opacity="0.6"/><path d="M244.4 179.5H268.7L273.1 183.9V199.1L268.7 203.5H244.4L240.0 199.1V183.9Z" fill="#5c5f61"/><circle cx="251.8" cy="194.7" r="1.3" fill="#1e1e28"/><circle cx="260.8" cy="187.3" r="1.3" fill="#1e1e28"/><path d="M210.7 202.7H228.2L233.1 207.6V232.1L228.2 237.0H210.7L205.8 232.1V207.6Z" fill="#4a4890"/><path d="M210.3 202.0H227.8L232.7 206.9V231.4L227.8 236.3H210.3L205.4 231.4V206.9Z" fill="#2e2c2a" opacity="0.6"/><path d="M209.9 201.5H226.9L231.8 206.4V230.4L226.9 235.3H209.9L205.0 230.4V206.4Z" fill="#5c5f61"/><circle cx="214.6" cy="222.8" r="1.3" fill="#1e1e28"/><circle cx="221.9" cy="212.5" r="1.3" fill="#1e1e28"/><path d="M244.4 212.2H269.8L274.4 216.8V233.0L269.8 237.6H244.4L239.8 233.0V216.8Z" fill="#4a4890"/><path d="M244.0 211.5H269.4L274.0 216.1V232.3L269.4 236.9H244.0L239.4 232.3V216.1Z" fill="#2e2c2a" opacity="0.6"/><path d="M243.6 211.0H268.5L273.1 215.6V231.3L268.5 235.9H243.6L239.0 231.3V215.6Z" fill="#5c5f61"/><circle cx="251.1" cy="226.7" r="1.3" fill="#1e1e28"/><circle cx="260.5" cy="219.1" r="1.3" fill="#1e1e28"/><circle cx="299.5" cy="169.0" r="16.0" fill="#3c3b38"/><circle cx="299.5" cy="169.0" r="11.5" fill="none" stroke="#5e5c58" stroke-width="4.8" stroke-dasharray="2.5 2"/><circle cx="299.5" cy="169.0" r="6.7" fill="#64625e"/><circle cx="298.7" cy="169.0" r="3.8" fill="#24221e"/><circle cx="297.5" cy="216.0" r="15.5" fill="#3c3b38"/><circle cx="297.5" cy="216.0" r="11.2" fill="none" stroke="#5e5c58" stroke-width="4.6" stroke-dasharray="2.5 2"/><circle cx="297.5" cy="216.0" r="6.5" fill="#64625e"/><circle cx="296.7" cy="216.0" r="3.7" fill="#24221e"/></g></svg>
<svg style="position:absolute;left:6px;top:50px" width="380" height="437"><circle cx="190.0" cy="218.1" r="124.8" fill="none" stroke="#9a9ab0" stroke-opacity="0.36" stroke-width="0.9"/><line x1="57.0" y1="218.1" x2="323.0" y2="218.1" stroke="#b8c8b0" stroke-opacity="0.6" stroke-width="1"/><line x1="190.0" y1="85.5" x2="190.0" y2="351.5" stroke="#c8a0b0" stroke-opacity="0.55" stroke-width="0.9"/></svg>
<svg style="position:absolute;left:248px;top:344.1px" width="58" height="9"><path transform="translate(0.00,0) scale(0.975)" d="M0.5 2.5h2.5M1.8 0.5v7l-0.8-0.6M0.5 5.5l2.5-1.2M3.5 2h4.3M5.6 0.5l-2 3M5.6 2l2 1.5M4 4h3.5v2.5h-3.5zM4 5.2h3.5M5.7 4v3.5h2" stroke="#e4505c" stroke-width="0.85" fill="none"/><path transform="translate(8.05,0) scale(0.975)" d="M0.7 0.8h2v6.7M0.7 0.8v6.2l-0.3 0.5M0.7 3h2M0.7 5h2M3.3 1.2h4.5M4.5 0.3v1.8M6.6 0.3v1.8M3.8 2.6h3.4v2.2h-3.4zM3.8 3.7h3.4M3.3 5.7h4.5M5.5 4.8l-2 2.9M5.5 5.7l2.3 2" stroke="#e4505c" stroke-width="0.85" fill="none"/><path transform="translate(16.10,0) scale(0.975)" d="M0.3 1.5h4M0.3 4h4M1.5 1.5v2.5l-1 3.5M3.2 1.5v6M7.5 0.5l-2.5 2M7.5 2.8l-2.5 2M7.8 5l-3.3 2.8" stroke="#e4505c" stroke-width="0.85" fill="none"/><path transform="translate(24.15,0) scale(0.975)" d="M0.3 2.5h7.5M5.5 0.3c0 3 0.5 5.5 2.3 7.2M6.8 0.6l0.8 0.8M0.8 4.2h3.4M2.5 4.2v3M0.3 7.3h4.3" stroke="#e4505c" stroke-width="0.85" fill="none"/><path transform="translate(32.20,0) scale(0.975)" d="M3 0.5l-2.7 3M5 0.5l2.8 3M1.5 4.3h5v3.3l-0.8-0.3M3.5 4.3c0 1.5-1 2.8-2.5 3.4" stroke="#e4505c" stroke-width="0.85" fill="none"/><path transform="translate(40.25,0) scale(0.975)" d="M3 0.3v0.8M0.5 1.8v-0.7h5v0.7M1 2.5h4M1 3.6h4M3 1.5v3.3M0.5 4.8h5M1.2 5.6h3.5v2h-3.5zM6.3 1.5v4.5M7.6 0.5v7l-0.8-0.3" stroke="#e4505c" stroke-width="0.85" fill="none"/><path transform="translate(48.30,0) scale(0.975)" d="M7 0.5c-2 0.5-4.5 0.8-5.8 0.8M1.2 1.3v3c0 1.5-0.3 2.7-1 3.8M1.2 3h6.5M2.8 4.8h4.5v2.8h-4.5z" stroke="#e4505c" stroke-width="0.85" fill="none"/></svg>
<div style="position:absolute;left:6px;top:440px;width:380px;height:47px;background:#7e4686;"></div>
<div class="s" style="left:43.81px;top:440.67px;height:8.06px;line-height:8.06px;font-size:6.2px;color:#e0d8e6;font-weight:normal;transform:scaleX(0.96);transform-origin:0 0;">FOV: 60</div>
<div class="s" style="left:43.81px;top:448.27px;height:8.06px;line-height:8.06px;font-size:6.2px;color:#e0d8e6;font-weight:normal;transform:scaleX(0.96);transform-origin:0 0;">FPS:   123.5</div>
<div class="s" style="left:43.81px;top:455.87px;height:8.06px;line-height:8.06px;font-size:6.2px;color:#e0d8e6;font-weight:normal;transform:scaleX(0.96);transform-origin:0 0;">BO_RENDERING</div>
<div class="s" style="left:195.7px;top:440.60px;height:8.19px;line-height:8.19px;font-size:6.3px;color:#e0d8e6;font-weight:normal;transform:scaleX(0.985);transform-origin:0 0;">Current Mesh: 20250701170901003_instance-pcd-0</div>
<div class="s" style="left:195.7px;top:448.20px;height:8.19px;line-height:8.19px;font-size:6.3px;color:#e0d8e6;font-weight:normal;transform:scaleX(0.985);transform-origin:0 0;">Vertices: 143,097   (171,347)</div>
<div class="s" style="left:195.7px;top:455.80px;height:8.19px;line-height:8.19px;font-size:6.3px;color:#e0d8e6;font-weight:normal;transform:scaleX(0.985);transform-origin:0 0;">Faces: 0   (0)</div>
<div class="s" style="left:195.7px;top:463.40px;height:8.19px;line-height:8.19px;font-size:6.3px;color:#e0d8e6;font-weight:normal;transform:scaleX(0.985);transform-origin:0 0;">Selection: v: 0 f: 0</div>
<div class="s" style="left:195.7px;top:471.00px;height:8.19px;line-height:8.19px;font-size:6.3px;color:#e0d8e6;font-weight:normal;transform:scaleX(0.985);transform-origin:0 0;">VC</div>
<div style="position:absolute;left:388.5px;top:49.6px;width:271.5px;height:10.3px;background:#dadada;border-top:0.6px solid #d2d2d2;border-bottom:0.6px solid #d4d4d4;box-sizing:border-box;"></div>
<div class="s" style="left:390.8px;top:51.18px;height:8.84px;line-height:8.84px;font-size:6.8px;color:#333;font-weight:normal;transform:scaleX(0.9);transform-origin:0 0;-webkit-text-stroke:0.12px #333;">Project_1</div>
<svg style="position:absolute;left:641px;top:52.5px;" width="6" height="5" viewBox="0 0 6 5"><rect x="1.5" y="0.5" width="4" height="3" fill="none" stroke="#555" stroke-width="0.8"/><rect x="0.5" y="1.5" width="4" height="3" fill="#dedede" stroke="#555" stroke-width="0.8"/></svg>
<svg style="position:absolute;left:652px;top:52.5px;" width="5" height="5" viewBox="0 0 5 5"><path d="M0.5 0.5L4.5 4.5M4.5 0.5L0.5 4.5" stroke="#333" stroke-width="0.9"/></svg>
<div style="position:absolute;left:393px;top:65.3px;width:262.5px;height:174.2px;background:#fff;border:1px solid #c4c4c4;box-sizing:border-box;"></div>
<div style="position:absolute;left:394px;top:230.5px;width:260.5px;height:8px;background:#f0f0f0;"></div>
<div style="position:absolute;left:402px;top:234.9px;width:243.5px;height:1px;background:#606060;"></div>
<svg style="position:absolute;left:395px;top:70.1px;" width="4" height="5" viewBox="0 0 4 5"><path d="M0.5 0.5L3 2.5L0.5 4.5" fill="none" stroke="#666" stroke-width="0.7"/></svg>
<div style="position:absolute;left:399.8px;top:67.89999999999999px;width:8.4px;height:9.2px;background:#e6e6e6;border:0.5px solid #cfcfcf;box-sizing:border-box;"></div>
<svg style="position:absolute;left:400.2px;top:68.6px" width="7.5" height="7.5" viewBox="0 0 12 12"><ellipse cx="6" cy="6" rx="4.6" ry="3.1" fill="#3a3a3a"/><ellipse cx="6" cy="6.1" rx="3.8" ry="2.5" fill="#22e622"/><circle cx="5.6" cy="5.4" r="1.2" fill="#111"/></svg>
<div class="s" style="left:410.8px;top:68.55px;height:9.10px;line-height:9.10px;font-size:7px;color:#444;font-weight:normal;transform:scaleX(0.917);transform-origin:0 0;-webkit-text-stroke:0.1px #444;">0</div>
<div class="s" style="left:424px;top:68.55px;height:9.10px;line-height:9.10px;font-size:7px;color:#333;font-weight:normal;transform:scaleX(0.917);transform-origin:0 0;-webkit-text-stroke:0.1px #333;">20250701170901003_instance-1_model-cpfv-0</div>
<svg style="position:absolute;left:586.8px;top:68.1px" width="9" height="9" viewBox="0 0 12 12"><path d="M1 3.5h7v7.5h-7z M1 3.5l2.5-2.5h7l-2.5 2.5 M8 11l2.5-2.5v-7.5" fill="none" stroke="#8a8a8a" stroke-width="0.7"/></svg>
<div style="position:absolute;left:597px;top:67.1px;width:11.6px;height:11px;background:#cce8ff;border:0.5px solid #99d1ff;box-sizing:border-box;border-radius:1px;"></div>
<svg style="position:absolute;left:597.8px;top:68.1px" width="10" height="10" viewBox="0 0 12 12"><g stroke="#333" stroke-width="0.8" stroke-linecap="round"><path d="M1.5 3.2l1.2-1M9 3.2l1.2-1M1.5 10l1.2-1M9 10l1.2-1"/></g><g fill="#333"><circle cx="4.6" cy="3" r="0.5"/><circle cx="6.8" cy="2" r="0.5"/><circle cx="4.6" cy="9.8" r="0.5"/><circle cx="6.8" cy="8.8" r="0.5"/></g></svg>
<svg style="position:absolute;left:609.5px;top:68.1px" width="9.5" height="9.5" viewBox="0 0 12 12"><path d="M3 1.5q3-1 6 0v9q-3 1-6 0z" fill="#fff" stroke="#222" stroke-width="0.8"/><path d="M4.3 2.2v7.6M7.7 2.2v7.6M4.3 3l1.7 3 1.7-3M4.3 9l1.7-3 1.7 3" fill="none" stroke="#222" stroke-width="0.6"/></svg>
<svg style="position:absolute;left:621.5px;top:68.1px" width="9" height="9" viewBox="0 0 12 12"><path d="M2.5 2q3.5-1.5 7 0v8q-3.5 1.5-7 0z" fill="#80b4e8"/><path d="M2.5 2h3v8.5h-3z" fill="#c8e0f8"/><path d="M2.5 2q3.5-1.5 7 0q-3.5 1.2-7 0z" fill="#b0d4f4"/></svg>
<div style="position:absolute;left:632px;top:67.1px;width:11px;height:11px;background:#cce8ff;border:0.5px solid #99d1ff;box-sizing:border-box;border-radius:1px;"></div>
<svg style="position:absolute;left:633.5px;top:68.39999999999999px;" width="8" height="8.5" viewBox="0 0 8 8.5"><rect x="3.5" y="1" width="3.5" height="7" fill="#f4f8fc" stroke="#aaa" stroke-width="0.4"/><path d="M1.3 8.2l2.8-6.2h-1.6l0.6-1.3h3.3l-3.2 7.5z" fill="#e84050"/></svg>
<div style="position:absolute;left:643.2px;top:67.1px;width:11.8px;height:11px;background:#cce8ff;border:0.5px solid #99d1ff;box-sizing:border-box;border-radius:1px;"></div>
<svg style="position:absolute;left:644.7px;top:68.6px;" width="9" height="8" viewBox="0 0 9 8"><rect x="0.6" y="0.6" width="7.8" height="6.8" rx="2.4" fill="#5a5a5a"/><rect x="1.8" y="1.8" width="5.4" height="4.4" rx="1.2" fill="#a8dcb0"/><path d="M2.5 2.5l2 1.5-2 1.5zM6.5 2.5l-2 1.5 2 1.5z" fill="#3a9a4a"/></svg>
<svg style="position:absolute;left:395px;top:83.1px;" width="4" height="5" viewBox="0 0 4 5"><path d="M0.5 0.5L3 2.5L0.5 4.5" fill="none" stroke="#666" stroke-width="0.7"/></svg>
<div style="position:absolute;left:399.8px;top:80.89999999999999px;width:8.4px;height:9.2px;background:#e6e6e6;border:0.5px solid #cfcfcf;box-sizing:border-box;"></div>
<svg style="position:absolute;left:400.2px;top:81.6px" width="7.5" height="7.5" viewBox="0 0 12 12"><ellipse cx="6" cy="6" rx="4.6" ry="3.1" fill="#3a3a3a"/><ellipse cx="6" cy="6.1" rx="3.8" ry="2.5" fill="#22e622"/><circle cx="5.6" cy="5.4" r="1.2" fill="#111"/></svg>
<div class="s" style="left:410.8px;top:81.55px;height:9.10px;line-height:9.10px;font-size:7px;color:#444;font-weight:normal;transform:scaleX(0.917);transform-origin:0 0;-webkit-text-stroke:0.1px #444;">1</div>
<div class="s" style="left:424px;top:81.55px;height:9.10px;line-height:9.10px;font-size:7px;color:#333;font-weight:normal;transform:scaleX(0.917);transform-origin:0 0;-webkit-text-stroke:0.1px #333;">20250701170901003_instance-1_scene-cpfv-0</div>
<svg style="position:absolute;left:586.8px;top:81.1px" width="9" height="9" viewBox="0 0 12 12"><path d="M1 3.5h7v7.5h-7z M1 3.5l2.5-2.5h7l-2.5 2.5 M8 11l2.5-2.5v-7.5" fill="none" stroke="#8a8a8a" stroke-width="0.7"/></svg>
<div style="position:absolute;left:597px;top:80.1px;width:11.6px;height:11px;background:#cce8ff;border:0.5px solid #99d1ff;box-sizing:border-box;border-radius:1px;"></div>
<svg style="position:absolute;left:597.8px;top:81.1px" width="10" height="10" viewBox="0 0 12 12"><g stroke="#333" stroke-width="0.8" stroke-linecap="round"><path d="M1.5 3.2l1.2-1M9 3.2l1.2-1M1.5 10l1.2-1M9 10l1.2-1"/></g><g fill="#333"><circle cx="4.6" cy="3" r="0.5"/><circle cx="6.8" cy="2" r="0.5"/><circle cx="4.6" cy="9.8" r="0.5"/><circle cx="6.8" cy="8.8" r="0.5"/></g></svg>
<svg style="position:absolute;left:609.5px;top:81.1px" width="9.5" height="9.5" viewBox="0 0 12 12"><path d="M3 1.5q3-1 6 0v9q-3 1-6 0z" fill="#fff" stroke="#222" stroke-width="0.8"/><path d="M4.3 2.2v7.6M7.7 2.2v7.6M4.3 3l1.7 3 1.7-3M4.3 9l1.7-3 1.7 3" fill="none" stroke="#222" stroke-width="0.6"/></svg>
<svg style="position:absolute;left:621.5px;top:81.1px" width="9" height="9" viewBox="0 0 12 12"><path d="M2.5 2q3.5-1.5 7 0v8q-3.5 1.5-7 0z" fill="#80b4e8"/><path d="M2.5 2h3v8.5h-3z" fill="#c8e0f8"/><path d="M2.5 2q3.5-1.5 7 0q-3.5 1.2-7 0z" fill="#b0d4f4"/></svg>
<div style="position:absolute;left:632px;top:80.1px;width:11px;height:11px;background:#cce8ff;border:0.5px solid #99d1ff;box-sizing:border-box;border-radius:1px;"></div>
<svg style="position:absolute;left:633.5px;top:81.39999999999999px;" width="8" height="8.5" viewBox="0 0 8 8.5"><rect x="3.5" y="1" width="3.5" height="7" fill="#f4f8fc" stroke="#aaa" stroke-width="0.4"/><path d="M1.3 8.2l2.8-6.2h-1.6l0.6-1.3h3.3l-3.2 7.5z" fill="#e84050"/></svg>
<div style="position:absolute;left:643.2px;top:80.1px;width:11.8px;height:11px;background:#cce8ff;border:0.5px solid #99d1ff;box-sizing:border-box;border-radius:1px;"></div>
<svg style="position:absolute;left:644.7px;top:81.6px;" width="9" height="8" viewBox="0 0 9 8"><rect x="0.6" y="0.6" width="7.8" height="6.8" rx="2.4" fill="#5a5a5a"/><rect x="1.8" y="1.8" width="5.4" height="4.4" rx="1.2" fill="#a8dcb0"/><path d="M2.5 2.5l2 1.5-2 1.5zM6.5 2.5l-2 1.5 2 1.5z" fill="#3a9a4a"/></svg>
<div style="position:absolute;left:409.7px;top:92.1px;width:245.3px;height:13px;background:#dcdc00;"></div>
<svg style="position:absolute;left:395px;top:96.1px;" width="4" height="5" viewBox="0 0 4 5"><path d="M0.5 0.5L3 2.5L0.5 4.5" fill="none" stroke="#666" stroke-width="0.7"/></svg>
<div style="position:absolute;left:399.8px;top:93.89999999999999px;width:8.4px;height:9.2px;background:#a8c8e8;border:0.5px solid #cfcfcf;box-sizing:border-box;"></div>
<svg style="position:absolute;left:400.2px;top:94.6px" width="7.5" height="7.5" viewBox="0 0 12 12"><ellipse cx="6" cy="6" rx="4.6" ry="3.1" fill="#3a3a3a"/><ellipse cx="6" cy="6.1" rx="3.8" ry="2.5" fill="#22e622"/><circle cx="5.6" cy="5.4" r="1.2" fill="#111"/></svg>
<div class="s" style="left:410.8px;top:94.55px;height:9.10px;line-height:9.10px;font-size:7px;color:#3c3ca8;font-weight:normal;transform:scaleX(0.917);transform-origin:0 0;-webkit-text-stroke:0.1px #3c3ca8;">2</div>
<div class="s" style="left:424px;top:94.55px;height:9.10px;line-height:9.10px;font-size:7px;color:#3c3ca8;font-weight:normal;transform:scaleX(0.917);transform-origin:0 0;-webkit-text-stroke:0.1px #3c3ca8;">20250701170901003_instance-pcd-0</div>
<svg style="position:absolute;left:586.8px;top:94.1px" width="9" height="9" viewBox="0 0 12 12"><path d="M1 3.5h7v7.5h-7z M1 3.5l2.5-2.5h7l-2.5 2.5 M8 11l2.5-2.5v-7.5" fill="none" stroke="#8a8a8a" stroke-width="0.7"/></svg>
<div style="position:absolute;left:597px;top:93.1px;width:11.6px;height:11px;background:#cce8ff;border:0.5px solid #99d1ff;box-sizing:border-box;border-radius:1px;"></div>
<svg style="position:absolute;left:597.8px;top:94.1px" width="10" height="10" viewBox="0 0 12 12"><g stroke="#333" stroke-width="0.8" stroke-linecap="round"><path d="M1.5 3.2l1.2-1M9 3.2l1.2-1M1.5 10l1.2-1M9 10l1.2-1"/></g><g fill="#333"><circle cx="4.6" cy="3" r="0.5"/><circle cx="6.8" cy="2" r="0.5"/><circle cx="4.6" cy="9.8" r="0.5"/><circle cx="6.8" cy="8.8" r="0.5"/></g></svg>
<svg style="position:absolute;left:609.5px;top:94.1px" width="9.5" height="9.5" viewBox="0 0 12 12"><path d="M3 1.5q3-1 6 0v9q-3 1-6 0z" fill="#fff" stroke="#222" stroke-width="0.8"/><path d="M4.3 2.2v7.6M7.7 2.2v7.6M4.3 3l1.7 3 1.7-3M4.3 9l1.7-3 1.7 3" fill="none" stroke="#222" stroke-width="0.6"/></svg>
<svg style="position:absolute;left:621.5px;top:94.1px" width="9" height="9" viewBox="0 0 12 12"><path d="M2.5 2q3.5-1.5 7 0v8q-3.5 1.5-7 0z" fill="#80b4e8"/><path d="M2.5 2h3v8.5h-3z" fill="#c8e0f8"/><path d="M2.5 2q3.5-1.5 7 0q-3.5 1.2-7 0z" fill="#b0d4f4"/></svg>
<div style="position:absolute;left:632px;top:93.1px;width:11px;height:11px;background:#cce8ff;border:0.5px solid #99d1ff;box-sizing:border-box;border-radius:1px;"></div>
<svg style="position:absolute;left:633.5px;top:94.39999999999999px;" width="8" height="8.5" viewBox="0 0 8 8.5"><rect x="3.5" y="1" width="3.5" height="7" fill="#f4f8fc" stroke="#aaa" stroke-width="0.4"/><path d="M1.3 8.2l2.8-6.2h-1.6l0.6-1.3h3.3l-3.2 7.5z" fill="#e84050"/></svg>
<div style="position:absolute;left:643.2px;top:93.1px;width:11.8px;height:11px;background:#cce8ff;border:0.5px solid #99d1ff;box-sizing:border-box;border-radius:1px;"></div>
<svg style="position:absolute;left:644.7px;top:94.6px;" width="9" height="8" viewBox="0 0 9 8"><rect x="0.6" y="0.6" width="7.8" height="6.8" rx="2.4" fill="#5a5a5a"/><rect x="1.8" y="1.8" width="5.4" height="4.4" rx="1.2" fill="#a8dcb0"/><path d="M2.5 2.5l2 1.5-2 1.5zM6.5 2.5l-2 1.5 2 1.5z" fill="#3a9a4a"/></svg>
<svg style="position:absolute;left:395px;top:109.1px;" width="4" height="5" viewBox="0 0 4 5"><path d="M0.5 0.5L3 2.5L0.5 4.5" fill="none" stroke="#666" stroke-width="0.7"/></svg>
<div style="position:absolute;left:399.8px;top:106.89999999999999px;width:8.4px;height:9.2px;background:#e6e6e6;border:0.5px solid #cfcfcf;box-sizing:border-box;"></div>
<svg style="position:absolute;left:400.2px;top:107.6px" width="7.5" height="7.5" viewBox="0 0 12 12"><ellipse cx="6" cy="6" rx="4.6" ry="3.1" fill="#3a3a3a"/><ellipse cx="6" cy="6.1" rx="3.8" ry="2.5" fill="#22e622"/><circle cx="5.6" cy="5.4" r="1.2" fill="#111"/></svg>
<div class="s" style="left:410.8px;top:107.55px;height:9.10px;line-height:9.10px;font-size:7px;color:#444;font-weight:normal;transform:scaleX(0.917);transform-origin:0 0;-webkit-text-stroke:0.1px #444;">3</div>
<div class="s" style="left:424px;top:107.55px;height:9.10px;line-height:9.10px;font-size:7px;color:#333;font-weight:normal;transform:scaleX(0.917);transform-origin:0 0;-webkit-text-stroke:0.1px #333;">20250701170901003_instance-pcd-1</div>
<svg style="position:absolute;left:586.8px;top:107.1px" width="9" height="9" viewBox="0 0 12 12"><path d="M1 3.5h7v7.5h-7z M1 3.5l2.5-2.5h7l-2.5 2.5 M8 11l2.5-2.5v-7.5" fill="none" stroke="#8a8a8a" stroke-width="0.7"/></svg>
<div style="position:absolute;left:597px;top:106.1px;width:11.6px;height:11px;background:#cce8ff;border:0.5px solid #99d1ff;box-sizing:border-box;border-radius:1px;"></div>
<svg style="position:absolute;left:597.8px;top:107.1px" width="10" height="10" viewBox="0 0 12 12"><g stroke="#333" stroke-width="0.8" stroke-linecap="round"><path d="M1.5 3.2l1.2-1M9 3.2l1.2-1M1.5 10l1.2-1M9 10l1.2-1"/></g><g fill="#333"><circle cx="4.6" cy="3" r="0.5"/><circle cx="6.8" cy="2" r="0.5"/><circle cx="4.6" cy="9.8" r="0.5"/><circle cx="6.8" cy="8.8" r="0.5"/></g></svg>
<svg style="position:absolute;left:609.5px;top:107.1px" width="9.5" height="9.5" viewBox="0 0 12 12"><path d="M3 1.5q3-1 6 0v9q-3 1-6 0z" fill="#fff" stroke="#222" stroke-width="0.8"/><path d="M4.3 2.2v7.6M7.7 2.2v7.6M4.3 3l1.7 3 1.7-3M4.3 9l1.7-3 1.7 3" fill="none" stroke="#222" stroke-width="0.6"/></svg>
<svg style="position:absolute;left:621.5px;top:107.1px" width="9" height="9" viewBox="0 0 12 12"><path d="M2.5 2q3.5-1.5 7 0v8q-3.5 1.5-7 0z" fill="#80b4e8"/><path d="M2.5 2h3v8.5h-3z" fill="#c8e0f8"/><path d="M2.5 2q3.5-1.5 7 0q-3.5 1.2-7 0z" fill="#b0d4f4"/></svg>
<div style="position:absolute;left:632px;top:106.1px;width:11px;height:11px;background:#cce8ff;border:0.5px solid #99d1ff;box-sizing:border-box;border-radius:1px;"></div>
<svg style="position:absolute;left:633.5px;top:107.39999999999999px;" width="8" height="8.5" viewBox="0 0 8 8.5"><rect x="3.5" y="1" width="3.5" height="7" fill="#f4f8fc" stroke="#aaa" stroke-width="0.4"/><path d="M1.3 8.2l2.8-6.2h-1.6l0.6-1.3h3.3l-3.2 7.5z" fill="#e84050"/></svg>
<div style="position:absolute;left:643.2px;top:106.1px;width:11.8px;height:11px;background:#cce8ff;border:0.5px solid #99d1ff;box-sizing:border-box;border-radius:1px;"></div>
<svg style="position:absolute;left:644.7px;top:107.6px;" width="9" height="8" viewBox="0 0 9 8"><rect x="0.6" y="0.6" width="7.8" height="6.8" rx="2.4" fill="#5a5a5a"/><rect x="1.8" y="1.8" width="5.4" height="4.4" rx="1.2" fill="#a8dcb0"/><path d="M2.5 2.5l2 1.5-2 1.5zM6.5 2.5l-2 1.5 2 1.5z" fill="#3a9a4a"/></svg>
<svg style="position:absolute;left:395px;top:122.1px;" width="4" height="5" viewBox="0 0 4 5"><path d="M0.5 0.5L3 2.5L0.5 4.5" fill="none" stroke="#666" stroke-width="0.7"/></svg>
<div style="position:absolute;left:399.8px;top:119.89999999999999px;width:8.4px;height:9.2px;background:#e6e6e6;border:0.5px solid #cfcfcf;box-sizing:border-box;"></div>
<svg style="position:absolute;left:400.2px;top:120.6px" width="7.5" height="7.5" viewBox="0 0 12 12"><ellipse cx="6" cy="6" rx="4.6" ry="3.1" fill="#3a3a3a"/><ellipse cx="6" cy="6.1" rx="3.8" ry="2.5" fill="#22e622"/><circle cx="5.6" cy="5.4" r="1.2" fill="#111"/></svg>
<div class="s" style="left:410.8px;top:120.55px;height:9.10px;line-height:9.10px;font-size:7px;color:#444;font-weight:normal;transform:scaleX(0.917);transform-origin:0 0;-webkit-text-stroke:0.1px #444;">4</div>
<div class="s" style="left:424px;top:120.55px;height:9.10px;line-height:9.10px;font-size:7px;color:#333;font-weight:normal;transform:scaleX(0.917);transform-origin:0 0;-webkit-text-stroke:0.1px #333;">20250701170901003_instance-pcd-2</div>
<svg style="position:absolute;left:586.8px;top:120.1px" width="9" height="9" viewBox="0 0 12 12"><path d="M1 3.5h7v7.5h-7z M1 3.5l2.5-2.5h7l-2.5 2.5 M8 11l2.5-2.5v-7.5" fill="none" stroke="#8a8a8a" stroke-width="0.7"/></svg>
<div style="position:absolute;left:597px;top:119.1px;width:11.6px;height:11px;background:#cce8ff;border:0.5px solid #99d1ff;box-sizing:border-box;border-radius:1px;"></div>
<svg style="position:absolute;left:597.8px;top:120.1px" width="10" height="10" viewBox="0 0 12 12"><g stroke="#333" stroke-width="0.8" stroke-linecap="round"><path d="M1.5 3.2l1.2-1M9 3.2l1.2-1M1.5 10l1.2-1M9 10l1.2-1"/></g><g fill="#333"><circle cx="4.6" cy="3" r="0.5"/><circle cx="6.8" cy="2" r="0.5"/><circle cx="4.6" cy="9.8" r="0.5"/><circle cx="6.8" cy="8.8" r="0.5"/></g></svg>
<svg style="position:absolute;left:609.5px;top:120.1px" width="9.5" height="9.5" viewBox="0 0 12 12"><path d="M3 1.5q3-1 6 0v9q-3 1-6 0z" fill="#fff" stroke="#222" stroke-width="0.8"/><path d="M4.3 2.2v7.6M7.7 2.2v7.6M4.3 3l1.7 3 1.7-3M4.3 9l1.7-3 1.7 3" fill="none" stroke="#222" stroke-width="0.6"/></svg>
<svg style="position:absolute;left:621.5px;top:120.1px" width="9" height="9" viewBox="0 0 12 12"><path d="M2.5 2q3.5-1.5 7 0v8q-3.5 1.5-7 0z" fill="#80b4e8"/><path d="M2.5 2h3v8.5h-3z" fill="#c8e0f8"/><path d="M2.5 2q3.5-1.5 7 0q-3.5 1.2-7 0z" fill="#b0d4f4"/></svg>
<div style="position:absolute;left:632px;top:119.1px;width:11px;height:11px;background:#cce8ff;border:0.5px solid #99d1ff;box-sizing:border-box;border-radius:1px;"></div>
<svg style="position:absolute;left:633.5px;top:120.39999999999999px;" width="8" height="8.5" viewBox="0 0 8 8.5"><rect x="3.5" y="1" width="3.5" height="7" fill="#f4f8fc" stroke="#aaa" stroke-width="0.4"/><path d="M1.3 8.2l2.8-6.2h-1.6l0.6-1.3h3.3l-3.2 7.5z" fill="#e84050"/></svg>
<div style="position:absolute;left:643.2px;top:119.1px;width:11.8px;height:11px;background:#cce8ff;border:0.5px solid #99d1ff;box-sizing:border-box;border-radius:1px;"></div>
<svg style="position:absolute;left:644.7px;top:120.6px;" width="9" height="8" viewBox="0 0 9 8"><rect x="0.6" y="0.6" width="7.8" height="6.8" rx="2.4" fill="#5a5a5a"/><rect x="1.8" y="1.8" width="5.4" height="4.4" rx="1.2" fill="#a8dcb0"/><path d="M2.5 2.5l2 1.5-2 1.5zM6.5 2.5l-2 1.5 2 1.5z" fill="#3a9a4a"/></svg>
<svg style="position:absolute;left:395px;top:135.1px;" width="4" height="5" viewBox="0 0 4 5"><path d="M0.5 0.5L3 2.5L0.5 4.5" fill="none" stroke="#666" stroke-width="0.7"/></svg>
<div style="position:absolute;left:399.8px;top:132.9px;width:8.4px;height:9.2px;background:#e6e6e6;border:0.5px solid #cfcfcf;box-sizing:border-box;"></div>
<svg style="position:absolute;left:400.2px;top:133.6px" width="7.5" height="7.5" viewBox="0 0 12 12"><ellipse cx="6" cy="6" rx="4.6" ry="3.1" fill="#3a3a3a"/><ellipse cx="6" cy="6.1" rx="3.8" ry="2.5" fill="#22e622"/><circle cx="5.6" cy="5.4" r="1.2" fill="#111"/></svg>
<div class="s" style="left:410.8px;top:133.55px;height:9.10px;line-height:9.10px;font-size:7px;color:#444;font-weight:normal;transform:scaleX(0.917);transform-origin:0 0;-webkit-text-stroke:0.1px #444;">5</div>
<div class="s" style="left:424px;top:133.55px;height:9.10px;line-height:9.10px;font-size:7px;color:#333;font-weight:normal;transform:scaleX(0.917);transform-origin:0 0;-webkit-text-stroke:0.1px #333;">20250701170901003_instance-2_model-cpfv-0</div>
<svg style="position:absolute;left:586.8px;top:133.1px" width="9" height="9" viewBox="0 0 12 12"><path d="M1 3.5h7v7.5h-7z M1 3.5l2.5-2.5h7l-2.5 2.5 M8 11l2.5-2.5v-7.5" fill="none" stroke="#8a8a8a" stroke-width="0.7"/></svg>
<div style="position:absolute;left:597px;top:132.1px;width:11.6px;height:11px;background:#cce8ff;border:0.5px solid #99d1ff;box-sizing:border-box;border-radius:1px;"></div>
<svg style="position:absolute;left:597.8px;top:133.1px" width="10" height="10" viewBox="0 0 12 12"><g stroke="#333" stroke-width="0.8" stroke-linecap="round"><path d="M1.5 3.2l1.2-1M9 3.2l1.2-1M1.5 10l1.2-1M9 10l1.2-1"/></g><g fill="#333"><circle cx="4.6" cy="3" r="0.5"/><circle cx="6.8" cy="2" r="0.5"/><circle cx="4.6" cy="9.8" r="0.5"/><circle cx="6.8" cy="8.8" r="0.5"/></g></svg>
<svg style="position:absolute;left:609.5px;top:133.1px" width="9.5" height="9.5" viewBox="0 0 12 12"><path d="M3 1.5q3-1 6 0v9q-3 1-6 0z" fill="#fff" stroke="#222" stroke-width="0.8"/><path d="M4.3 2.2v7.6M7.7 2.2v7.6M4.3 3l1.7 3 1.7-3M4.3 9l1.7-3 1.7 3" fill="none" stroke="#222" stroke-width="0.6"/></svg>
<svg style="position:absolute;left:621.5px;top:133.1px" width="9" height="9" viewBox="0 0 12 12"><path d="M2.5 2q3.5-1.5 7 0v8q-3.5 1.5-7 0z" fill="#80b4e8"/><path d="M2.5 2h3v8.5h-3z" fill="#c8e0f8"/><path d="M2.5 2q3.5-1.5 7 0q-3.5 1.2-7 0z" fill="#b0d4f4"/></svg>
<div style="position:absolute;left:632px;top:132.1px;width:11px;height:11px;background:#cce8ff;border:0.5px solid #99d1ff;box-sizing:border-box;border-radius:1px;"></div>
<svg style="position:absolute;left:633.5px;top:133.4px;" width="8" height="8.5" viewBox="0 0 8 8.5"><rect x="3.5" y="1" width="3.5" height="7" fill="#f4f8fc" stroke="#aaa" stroke-width="0.4"/><path d="M1.3 8.2l2.8-6.2h-1.6l0.6-1.3h3.3l-3.2 7.5z" fill="#e84050"/></svg>
<div style="position:absolute;left:643.2px;top:132.1px;width:11.8px;height:11px;background:#cce8ff;border:0.5px solid #99d1ff;box-sizing:border-box;border-radius:1px;"></div>
<svg style="position:absolute;left:644.7px;top:133.6px;" width="9" height="8" viewBox="0 0 9 8"><rect x="0.6" y="0.6" width="7.8" height="6.8" rx="2.4" fill="#5a5a5a"/><rect x="1.8" y="1.8" width="5.4" height="4.4" rx="1.2" fill="#a8dcb0"/><path d="M2.5 2.5l2 1.5-2 1.5zM6.5 2.5l-2 1.5 2 1.5z" fill="#3a9a4a"/></svg>
<div style="position:absolute;left:398px;top:144.1px;width:256.5px;height:13px;background:#e5f3ff;"></div>
<svg style="position:absolute;left:395px;top:148.1px;" width="4" height="5" viewBox="0 0 4 5"><path d="M0.5 0.5L3 2.5L0.5 4.5" fill="none" stroke="#666" stroke-width="0.7"/></svg>
<div style="position:absolute;left:399.8px;top:145.9px;width:8.4px;height:9.2px;background:#e6e6e6;border:0.5px solid #cfcfcf;box-sizing:border-box;"></div>
<svg style="position:absolute;left:400.2px;top:146.6px" width="7.5" height="7.5" viewBox="0 0 12 12"><ellipse cx="6" cy="6" rx="4.6" ry="3.1" fill="#3a3a3a"/><ellipse cx="6" cy="6.1" rx="3.8" ry="2.5" fill="#22e622"/><circle cx="5.6" cy="5.4" r="1.2" fill="#111"/></svg>
<div class="s" style="left:410.8px;top:146.55px;height:9.10px;line-height:9.10px;font-size:7px;color:#444;font-weight:normal;transform:scaleX(0.917);transform-origin:0 0;-webkit-text-stroke:0.1px #444;">6</div>
<div class="s" style="left:424px;top:146.55px;height:9.10px;line-height:9.10px;font-size:7px;color:#333;font-weight:normal;transform:scaleX(0.917);transform-origin:0 0;-webkit-text-stroke:0.1px #333;">20250701170901003_instance-2_scene-cpfv-0</div>
<svg style="position:absolute;left:586.8px;top:146.1px" width="9" height="9" viewBox="0 0 12 12"><path d="M1 3.5h7v7.5h-7z M1 3.5l2.5-2.5h7l-2.5 2.5 M8 11l2.5-2.5v-7.5" fill="none" stroke="#8a8a8a" stroke-width="0.7"/></svg>
<div style="position:absolute;left:597px;top:145.1px;width:11.6px;height:11px;background:#cce8ff;border:0.5px solid #99d1ff;box-sizing:border-box;border-radius:1px;"></div>
<svg style="position:absolute;left:597.8px;top:146.1px" width="10" height="10" viewBox="0 0 12 12"><g stroke="#333" stroke-width="0.8" stroke-linecap="round"><path d="M1.5 3.2l1.2-1M9 3.2l1.2-1M1.5 10l1.2-1M9 10l1.2-1"/></g><g fill="#333"><circle cx="4.6" cy="3" r="0.5"/><circle cx="6.8" cy="2" r="0.5"/><circle cx="4.6" cy="9.8" r="0.5"/><circle cx="6.8" cy="8.8" r="0.5"/></g></svg>
<svg style="position:absolute;left:609.5px;top:146.1px" width="9.5" height="9.5" viewBox="0 0 12 12"><path d="M3 1.5q3-1 6 0v9q-3 1-6 0z" fill="#fff" stroke="#222" stroke-width="0.8"/><path d="M4.3 2.2v7.6M7.7 2.2v7.6M4.3 3l1.7 3 1.7-3M4.3 9l1.7-3 1.7 3" fill="none" stroke="#222" stroke-width="0.6"/></svg>
<svg style="position:absolute;left:621.5px;top:146.1px" width="9" height="9" viewBox="0 0 12 12"><path d="M2.5 2q3.5-1.5 7 0v8q-3.5 1.5-7 0z" fill="#80b4e8"/><path d="M2.5 2h3v8.5h-3z" fill="#c8e0f8"/><path d="M2.5 2q3.5-1.5 7 0q-3.5 1.2-7 0z" fill="#b0d4f4"/></svg>
<div style="position:absolute;left:632px;top:145.1px;width:11px;height:11px;background:#cce8ff;border:0.5px solid #99d1ff;box-sizing:border-box;border-radius:1px;"></div>
<svg style="position:absolute;left:633.5px;top:146.4px;" width="8" height="8.5" viewBox="0 0 8 8.5"><rect x="3.5" y="1" width="3.5" height="7" fill="#f4f8fc" stroke="#aaa" stroke-width="0.4"/><path d="M1.3 8.2l2.8-6.2h-1.6l0.6-1.3h3.3l-3.2 7.5z" fill="#e84050"/></svg>
<div style="position:absolute;left:643.2px;top:145.1px;width:11.8px;height:11px;background:#cce8ff;border:0.5px solid #99d1ff;box-sizing:border-box;border-radius:1px;"></div>
<svg style="position:absolute;left:644.7px;top:146.6px;" width="9" height="8" viewBox="0 0 9 8"><rect x="0.6" y="0.6" width="7.8" height="6.8" rx="2.4" fill="#5a5a5a"/><rect x="1.8" y="1.8" width="5.4" height="4.4" rx="1.2" fill="#a8dcb0"/><path d="M2.5 2.5l2 1.5-2 1.5zM6.5 2.5l-2 1.5 2 1.5z" fill="#3a9a4a"/></svg>
<svg style="position:absolute;left:395px;top:161.1px;" width="4" height="5" viewBox="0 0 4 5"><path d="M0.5 0.5L3 2.5L0.5 4.5" fill="none" stroke="#666" stroke-width="0.7"/></svg>
<div style="position:absolute;left:399.8px;top:158.9px;width:8.4px;height:9.2px;background:#e6e6e6;border:0.5px solid #cfcfcf;box-sizing:border-box;"></div>
<svg style="position:absolute;left:400.8px;top:160.1px;" width="6.5" height="7" viewBox="0 0 6.5 7"><path d="M0.3 5.2q2.8 1.2 5.8 -1.2" fill="none" stroke="#333" stroke-width="0.7"/></svg>
<div class="s" style="left:410.8px;top:159.55px;height:9.10px;line-height:9.10px;font-size:7px;color:#444;font-weight:normal;transform:scaleX(0.917);transform-origin:0 0;-webkit-text-stroke:0.1px #444;">7</div>
<div class="s" style="left:424px;top:159.55px;height:9.10px;line-height:9.10px;font-size:7px;color:#333;font-weight:normal;transform:scaleX(0.917);transform-origin:0 0;-webkit-text-stroke:0.1px #333;">20250701170901003_instance-2_instancePcd-inverse-0</div>
<svg style="position:absolute;left:586.8px;top:159.1px" width="9" height="9" viewBox="0 0 12 12"><path d="M1 3.5h7v7.5h-7z M1 3.5l2.5-2.5h7l-2.5 2.5 M8 11l2.5-2.5v-7.5" fill="none" stroke="#8a8a8a" stroke-width="0.7"/></svg>
<div style="position:absolute;left:597px;top:158.1px;width:11.6px;height:11px;background:#cce8ff;border:0.5px solid #99d1ff;box-sizing:border-box;border-radius:1px;"></div>
<svg style="position:absolute;left:597.8px;top:159.1px" width="10" height="10" viewBox="0 0 12 12"><g stroke="#333" stroke-width="0.8" stroke-linecap="round"><path d="M1.5 3.2l1.2-1M9 3.2l1.2-1M1.5 10l1.2-1M9 10l1.2-1"/></g><g fill="#333"><circle cx="4.6" cy="3" r="0.5"/><circle cx="6.8" cy="2" r="0.5"/><circle cx="4.6" cy="9.8" r="0.5"/><circle cx="6.8" cy="8.8" r="0.5"/></g></svg>
<svg style="position:absolute;left:609.5px;top:159.1px" width="9.5" height="9.5" viewBox="0 0 12 12"><path d="M3 1.5q3-1 6 0v9q-3 1-6 0z" fill="#fff" stroke="#222" stroke-width="0.8"/><path d="M4.3 2.2v7.6M7.7 2.2v7.6M4.3 3l1.7 3 1.7-3M4.3 9l1.7-3 1.7 3" fill="none" stroke="#222" stroke-width="0.6"/></svg>
<svg style="position:absolute;left:621.5px;top:159.1px" width="9" height="9" viewBox="0 0 12 12"><path d="M2.5 2q3.5-1.5 7 0v8q-3.5 1.5-7 0z" fill="#80b4e8"/><path d="M2.5 2h3v8.5h-3z" fill="#c8e0f8"/><path d="M2.5 2q3.5-1.5 7 0q-3.5 1.2-7 0z" fill="#b0d4f4"/></svg>
<div style="position:absolute;left:632px;top:158.1px;width:11px;height:11px;background:#cce8ff;border:0.5px solid #99d1ff;box-sizing:border-box;border-radius:1px;"></div>
<svg style="position:absolute;left:633.5px;top:159.4px;" width="8" height="8.5" viewBox="0 0 8 8.5"><rect x="3.5" y="1" width="3.5" height="7" fill="#f4f8fc" stroke="#aaa" stroke-width="0.4"/><path d="M1.3 8.2l2.8-6.2h-1.6l0.6-1.3h3.3l-3.2 7.5z" fill="#e84050"/></svg>
<div style="position:absolute;left:643.2px;top:158.1px;width:11.8px;height:11px;background:#cce8ff;border:0.5px solid #99d1ff;box-sizing:border-box;border-radius:1px;"></div>
<svg style="position:absolute;left:644.7px;top:159.6px;" width="9" height="8" viewBox="0 0 9 8"><rect x="0.6" y="0.6" width="7.8" height="6.8" rx="2.4" fill="#5a5a5a"/><rect x="1.8" y="1.8" width="5.4" height="4.4" rx="1.2" fill="#a8dcb0"/><path d="M2.5 2.5l2 1.5-2 1.5zM6.5 2.5l-2 1.5 2 1.5z" fill="#3a9a4a"/></svg>
<div style="position:absolute;left:394px;top:244.9px;width:12.8px;height:7.4px;background:#fdfdfd;border:0.6px solid #d0d0d0;border-radius:2px;box-sizing:border-box;"></div>
<div class="m" style="left:398.6px;top:244.80px;height:7.80px;line-height:7.80px;font-size:6px;color:#111;font-weight:bold;">1</div>
<div style="position:absolute;left:411.4px;top:244.9px;width:12.8px;height:7.4px;background:#fdfdfd;border:0.6px solid #d0d0d0;border-radius:2px;box-sizing:border-box;"></div>
<div class="m" style="left:416.0px;top:244.80px;height:7.80px;line-height:7.80px;font-size:6px;color:#111;font-weight:bold;">2</div>
<div style="position:absolute;left:428.8px;top:244.9px;width:12.8px;height:7.4px;background:#fdfdfd;border:0.6px solid #d0d0d0;border-radius:2px;box-sizing:border-box;"></div>
<div class="m" style="left:433.40000000000003px;top:244.80px;height:7.80px;line-height:7.80px;font-size:6px;color:#111;font-weight:bold;">3</div>
<div style="position:absolute;left:445.4px;top:244.9px;width:12.8px;height:7.4px;background:#fdfdfd;border:0.6px solid #d0d0d0;border-radius:2px;box-sizing:border-box;"></div>
<div class="m" style="left:450.0px;top:244.80px;height:7.80px;line-height:7.80px;font-size:6px;color:#111;font-weight:bold;">4</div>
<div style="position:absolute;left:590.4px;top:244.9px;width:12.8px;height:7.4px;background:#fdfdfd;border:0.6px solid #d0d0d0;border-radius:2px;box-sizing:border-box;"></div>
<div class="m" style="left:595.0px;top:244.80px;height:7.80px;line-height:7.80px;font-size:6px;color:#111;font-weight:bold;">1</div>
<div style="position:absolute;left:607.4px;top:244.9px;width:12.8px;height:7.4px;background:#fdfdfd;border:0.6px solid #d0d0d0;border-radius:2px;box-sizing:border-box;"></div>
<div class="m" style="left:612.0px;top:244.80px;height:7.80px;line-height:7.80px;font-size:6px;color:#111;font-weight:bold;">2</div>
<div style="position:absolute;left:624.4px;top:244.9px;width:12.8px;height:7.4px;background:#fdfdfd;border:0.6px solid #d0d0d0;border-radius:2px;box-sizing:border-box;"></div>
<div class="m" style="left:629.0px;top:244.80px;height:7.80px;line-height:7.80px;font-size:6px;color:#111;font-weight:bold;">3</div>
<div style="position:absolute;left:641.4px;top:244.9px;width:12.8px;height:7.4px;background:#fdfdfd;border:0.6px solid #d0d0d0;border-radius:2px;box-sizing:border-box;"></div>
<div class="m" style="left:646.0px;top:244.80px;height:7.80px;line-height:7.80px;font-size:6px;color:#111;font-weight:bold;">4</div>
<div style="position:absolute;left:393.4px;top:260.3px;width:262.40000000000003px;height:126px;border:0.6px solid #dcdcdc;box-sizing:border-box;"></div>
<div style="position:absolute;left:398px;top:255.5px;width:150px;height:9px;background:#f0f0f0;"></div>
<div class="m" style="left:399.4px;top:256.53px;height:8.75px;line-height:8.75px;font-size:6.73px;color:#222;font-weight:normal;">20250701170901003_instance-pcd-0.ply</div>
<div style="position:absolute;left:399.4px;top:270.0px;width:22.1px;height:11px;background:#e9e9e9;border:0.5px solid #dadada;box-sizing:border-box;"></div>
<svg style="position:absolute;left:405.9px;top:271.5px" width="8.5" height="8.5" viewBox="0 0 12 12"><path d="M1 3.5h7v7.5h-7z M1 3.5l2.5-2.5h7l-2.5 2.5 M8 11l2.5-2.5v-7.5" fill="none" stroke="#8a8a8a" stroke-width="0.7"/></svg>
<div style="position:absolute;left:421.5px;top:270.0px;width:22.1px;height:11px;background:#fafafa;border:0.5px solid #dadada;box-sizing:border-box;"></div>
<svg style="position:absolute;left:428.0px;top:271.5px" width="8.5" height="8.5" viewBox="0 0 12 12"><g stroke="#333" stroke-width="0.8" stroke-linecap="round"><path d="M1.5 3.2l1.2-1M9 3.2l1.2-1M1.5 10l1.2-1M9 10l1.2-1"/></g><g fill="#333"><circle cx="4.6" cy="3" r="0.5"/><circle cx="6.8" cy="2" r="0.5"/><circle cx="4.6" cy="9.8" r="0.5"/><circle cx="6.8" cy="8.8" r="0.5"/></g></svg>
<div style="position:absolute;left:443.59999999999997px;top:270.0px;width:22.1px;height:11px;background:#e9e9e9;border:0.5px solid #dadada;box-sizing:border-box;"></div>
<svg style="position:absolute;left:450.09999999999997px;top:271.5px" width="8.5" height="8.5" viewBox="0 0 12 12"><path d="M3 1.5q3-1 6 0v9q-3 1-6 0z" fill="#fff" stroke="#222" stroke-width="0.8"/><path d="M4.3 2.2v7.6M7.7 2.2v7.6M4.3 3l1.7 3 1.7-3M4.3 9l1.7-3 1.7 3" fill="none" stroke="#222" stroke-width="0.6"/></svg>
<div style="position:absolute;left:465.7px;top:270.0px;width:22.1px;height:11px;background:#e9e9e9;border:0.5px solid #dadada;box-sizing:border-box;"></div>
<svg style="position:absolute;left:472.2px;top:271.5px" width="8.5" height="8.5" viewBox="0 0 12 12"><path d="M2.5 2q3.5-1.5 7 0v8q-3.5 1.5-7 0z" fill="#a8cdf0"/><path d="M4.5 1.6h2.5v9.2h-2.5z" fill="#f2f8fe"/><path d="M8 1.8h1.5v8.5h-1.5z" fill="#80b4e8"/></svg>
<div style="position:absolute;left:487.79999999999995px;top:270.0px;width:22.1px;height:11px;background:#e9e9e9;border:0.5px solid #dadada;box-sizing:border-box;"></div>
<svg style="position:absolute;left:495.29999999999995px;top:272.0px;" width="8" height="8.5" viewBox="0 0 8 8.5"><rect x="1" y="1" width="6" height="7" fill="#e0e0e0" stroke="#999" stroke-width="0.4"/><path d="M1.5 8l3-7h2l-3 7z" fill="#e04050"/></svg>
<div style="position:absolute;left:509.9px;top:270.0px;width:22.1px;height:11px;background:#e9e9e9;border:0.5px solid #dadada;box-sizing:border-box;"></div>
<svg style="position:absolute;left:516.9px;top:272.0px;" width="9" height="8" viewBox="0 0 9 8"><rect x="0.5" y="0.5" width="8" height="7" rx="2" fill="#555"/><rect x="2" y="2" width="5" height="4" rx="1" fill="#7ccf8a"/></svg>
<div style="position:absolute;left:398.7px;top:281.0px;width:250.20000000000002px;height:85.8px;border:0.6px solid #dedede;box-sizing:border-box;"></div>
<div class="m" style="left:403.7px;top:288.52px;height:9.75px;line-height:9.75px;font-size:7.5px;color:#111;font-weight:bold;">Shading</div>
<div class="m" style="left:403.7px;top:304.23px;height:9.75px;line-height:9.75px;font-size:7.5px;color:#111;font-weight:bold;">Color</div>
<div class="m" style="left:403.7px;top:341.02px;height:9.75px;line-height:9.75px;font-size:7.5px;color:#111;font-weight:bold;">Point Size</div>
<div style="position:absolute;left:523px;top:287.3px;width:28px;height:9.7px;background:#cce8ff;border:0.6px solid #99d1ff;box-sizing:border-box;border-radius:1px;"></div>
<div style="position:absolute;left:523px;top:302.6px;width:28px;height:9.7px;background:#cce8ff;border:0.6px solid #99d1ff;box-sizing:border-box;border-radius:1px;"></div>
<div class="m" style="left:528.5px;top:288.83px;height:8.75px;line-height:8.75px;font-size:6.73px;color:#111;font-weight:normal;">Vert</div>
<div class="m" style="left:528.5px;top:304.33px;height:8.75px;line-height:8.75px;font-size:6.73px;color:#111;font-weight:normal;">Vert</div>
<div class="m" style="left:556.3px;top:288.93px;height:8.75px;line-height:8.75px;font-size:6.73px;color:#111;font-weight:normal;">Dot Decorator</div>
<div class="m" style="left:620px;top:288.93px;height:8.75px;line-height:8.75px;font-size:6.73px;color:#111;font-weight:normal;">None</div>
<div class="m" style="left:556.3px;top:304.73px;height:8.75px;line-height:8.75px;font-size:6.73px;color:#111;font-weight:normal;">Mesh</div>
<div class="m" style="left:584px;top:304.73px;height:8.75px;line-height:8.75px;font-size:6.73px;color:#111;font-weight:normal;">User-Def</div>
<div style="position:absolute;left:623px;top:304.0px;width:7.4px;height:7.5px;background:#7e9a3e;border:0.5px solid #666;box-sizing:border-box;"></div>
<div style="position:absolute;left:561px;top:342.5px;width:43px;height:1.6px;background:#dcdcdc;border-radius:1px;"></div>
<div style="position:absolute;left:566px;top:338.5px;width:6px;height:10.5px;background:#0f78d7;border-radius:1px;"></div>
<div class="m" style="left:532px;top:372.53px;height:8.75px;line-height:8.75px;font-size:6.73px;color:#111;font-weight:normal;">apply to all visible layers</div>
<div style="position:absolute;left:644px;top:373.0px;width:7px;height:6.5px;background:#fff;border:0.6px solid #333;box-sizing:border-box;border-radius:1px;"></div>
<div style="position:absolute;left:393.5px;top:396.0px;width:262.0px;height:85.5px;background:#fff;border-bottom:0.8px solid #a0a0a0;box-sizing:border-box;"></div>
<div style="position:absolute;left:647.5px;top:396.0px;width:8px;height:84.5px;background:#f0f0f0;"></div>
<div style="position:absolute;left:651.0px;top:451.5px;width:1px;height:22px;background:#8a8a8a;"></div>
<div class="m" style="left:395.9px;top:396.60px;height:7.00px;line-height:7.00px;font-size:6.73px;color:#7f7f7f;font-weight:normal;">All files opened in 16 msec</div>
<div class="m" style="left:395.9px;top:403.17px;height:7.00px;line-height:7.00px;font-size:6.73px;color:#7f7f7f;font-weight:normal;">Opened mesh C:/Users/dex/Documents/PickWiz/new_project/data/</div>
<div class="m" style="left:395.9px;top:409.74px;height:7.00px;line-height:7.00px;font-size:6.73px;color:#7f7f7f;font-weight:normal;">PickLight/20250701170901003/Builder/pose/input/</div>
<div class="m" style="left:395.9px;top:416.31px;height:7.00px;line-height:7.00px;font-size:6.73px;color:#7f7f7f;font-weight:normal;">20250701170901003_instance-2_scene-cpfv-0.ply in 15 msec</div>
<div class="m" style="left:395.9px;top:422.88px;height:7.00px;line-height:7.00px;font-size:6.73px;color:#7f7f7f;font-weight:normal;">All files opened in 16 msec</div>
<div class="m" style="left:395.9px;top:429.45px;height:7.00px;line-height:7.00px;font-size:6.73px;color:#7f7f7f;font-weight:normal;">Opened mesh C:/Users/dex/Documents/PickWiz/new_project/data/</div>
<div class="m" style="left:395.9px;top:436.02px;height:7.00px;line-height:7.00px;font-size:6.73px;color:#7f7f7f;font-weight:normal;">PickLight/20250701170901003/Builder/pose/input/</div>
<div class="m" style="left:395.9px;top:442.59px;height:7.00px;line-height:7.00px;font-size:6.73px;color:#7f7f7f;font-weight:normal;">20250701170901003_instance-2_instancePcd-inverse-0.ply in 18</div>
<div class="m" style="left:395.9px;top:449.16px;height:7.00px;line-height:7.00px;font-size:6.73px;color:#7f7f7f;font-weight:normal;">msec</div>
<div class="m" style="left:395.9px;top:456.53px;height:7.00px;line-height:7.00px;font-size:6.73px;color:#7f7f7f;font-weight:normal;">All files opened in 18 msec</div>
<div style="position:absolute;left:251.25px;top:489.25px;width:224.5px;height:12.5px;background:#e6e6e6;border:0.6px solid #cfcfcf;box-sizing:border-box;"></div>
<div style="position:absolute;left:498px;top:489px;width:151.6px;height:13px;background:#cdcdcd;border:0.8px solid #888;box-sizing:border-box;"></div>
<div style="position:absolute;left:498.8px;top:489.8px;width:82.6px;height:11.4px;background:#7aba7a;"></div>
<div style="position:absolute;left:6px;top:501.5px;width:654px;height:1.5px;background:#fafafa;"></div>
<div class="m" style="left:535px;top:491.98px;height:8.84px;line-height:8.84px;font-size:6.8px;color:#111;font-weight:bold;transform:scaleX(0.95);transform-origin:0 0;">Mem 55% 3380/6144 MB</div>
<div style="position:absolute;left:663.2px;top:10.5px;width:621.8px;height:514.5px;background:#f0f0f0;border-radius:5px 5px 0 0;overflow:hidden;"></div>
<div style="position:absolute;left:663.2px;top:10.5px;width:621.8px;height:14px;background:#eef3f7;border-radius:5px 5px 0 0;"></div>
<svg style="position:absolute;left:667.8000000000001px;top:13.7px" width="8.5" height="8.5" viewBox="0 0 12 12"><ellipse cx="6" cy="6.5" rx="5.6" ry="4" fill="#aaa" opacity="0.45"/><path d="M1.2 7 Q4 2.2 10.8 3 Q11 7 7.5 8.8 Q3.5 10 1.2 7Z" fill="#1e1e1e"/><ellipse cx="5" cy="6.8" rx="2.2" ry="1.4" fill="#3fbf3f"/><ellipse cx="4.5" cy="6.6" rx="0.9" ry="0.6" fill="#b8f0b8"/></svg>
<div class="s" style="left:677.7px;top:13.46px;height:9.88px;line-height:9.88px;font-size:7.6px;color:#2a2a2a;font-weight:normal;transform:scaleX(0.78);transform-origin:0 0;-webkit-text-stroke:0.12px #2a2a2a;">MeshLab 2020.07 - [Project_1]</div>
<div style="position:absolute;left:1224.5px;top:17.5px;width:5.5px;height:0.8px;background:#2a2a2a;"></div>
<div style="position:absolute;left:1247.2px;top:15.1px;width:5.2px;height:5.2px;border:0.6px solid #2a2a2a;border-radius:1px;box-sizing:border-box;"></div>
<svg style="position:absolute;left:1270.5px;top:15.0px;" width="6" height="6" viewBox="0 0 6 6"><path d="M0.3 0.3L5.7 5.7M5.7 0.3L0.3 5.7" stroke="#2a2a2a" stroke-width="0.65"/></svg>
<div style="position:absolute;left:663.2px;top:24.5px;width:621.8px;height:13px;background:#fff;"></div>
<svg style="position:absolute;left:664.3000000000001px;top:27.1px" width="8.5" height="8.5" viewBox="0 0 12 12"><ellipse cx="6" cy="6.5" rx="5.6" ry="4" fill="#aaa" opacity="0.45"/><path d="M1.2 7 Q4 2.2 10.8 3 Q11 7 7.5 8.8 Q3.5 10 1.2 7Z" fill="#1e1e1e"/><ellipse cx="5" cy="6.8" rx="2.2" ry="1.4" fill="#3fbf3f"/><ellipse cx="4.5" cy="6.6" rx="0.9" ry="0.6" fill="#b8f0b8"/></svg>
<div class="s" style="left:675.1px;top:26.82px;height:9.36px;line-height:9.36px;font-size:7.2px;color:#333;font-weight:normal;transform:scaleX(0.93);transform-origin:0 0;">File</div>
<div class="s" style="left:692.8000000000001px;top:26.82px;height:9.36px;line-height:9.36px;font-size:7.2px;color:#333;font-weight:normal;transform:scaleX(0.93);transform-origin:0 0;">Edit</div>
<div class="s" style="left:711.9000000000001px;top:26.82px;height:9.36px;line-height:9.36px;font-size:7.2px;color:#333;font-weight:normal;transform:scaleX(0.93);transform-origin:0 0;">Filters</div>
<div class="s" style="left:737.2px;top:26.82px;height:9.36px;line-height:9.36px;font-size:7.2px;color:#333;font-weight:normal;transform:scaleX(0.93);transform-origin:0 0;">Render</div>
<div class="s" style="left:766.2px;top:26.82px;height:9.36px;line-height:9.36px;font-size:7.2px;color:#333;font-weight:normal;transform:scaleX(0.93);transform-origin:0 0;">View</div>
<div class="s" style="left:788.2px;top:26.82px;height:9.36px;line-height:9.36px;font-size:7.2px;color:#333;font-weight:normal;transform:scaleX(0.93);transform-origin:0 0;">Windows</div>
<div class="s" style="left:823.2px;top:26.82px;height:9.36px;line-height:9.36px;font-size:7.2px;color:#333;font-weight:normal;transform:scaleX(0.93);transform-origin:0 0;">Tools</div>
<div class="s" style="left:847.2px;top:26.82px;height:9.36px;line-height:9.36px;font-size:7.2px;color:#333;font-weight:normal;transform:scaleX(0.93);transform-origin:0 0;">Help</div>
<div style="position:absolute;left:1257.7px;top:27.1px;width:7.5px;height:7.5px;background:#fff;border:0.5px solid #e8e8e8;border-radius:1px;"></div>
<div style="position:absolute;left:1266.6px;top:27.1px;width:7.5px;height:7.5px;background:#fff;border:0.5px solid #e8e8e8;border-radius:1px;"></div>
<div style="position:absolute;left:1276.3px;top:27.1px;width:7.5px;height:7.5px;background:#fff;border:0.5px solid #e8e8e8;border-radius:1px;"></div>
<div style="position:absolute;left:1259.7px;top:32.7px;width:3px;height:0.8px;background:#555;"></div>
<svg style="position:absolute;left:1268.1px;top:28.4px;" width="5" height="5" viewBox="0 0 5 5"><rect x="1.3" y="0.5" width="3.2" height="3" fill="none" stroke="#777" stroke-width="0.7"/><rect x="0.5" y="1.5" width="3.2" height="3" fill="#fff" stroke="#777" stroke-width="0.7"/></svg>
<svg style="position:absolute;left:1277.9px;top:28.5px;" width="5" height="5" viewBox="0 0 5 5"><path d="M0.5 0.5L4.5 4.5M4.5 0.5L0.5 4.5" stroke="#2a3a60" stroke-width="0.9"/></svg>
<div style="position:absolute;left:663.2px;top:37.5px;width:621.8px;height:20px;background:#f0f0f0;"></div>
<svg style="position:absolute;left:669.95px;top:40.9px" width="11.5" height="11.5" viewBox="0 0 12 12"><path d="M2 0.8h5.5l2.5 2.5v8h-8z" fill="#fff" stroke="#9a9a9a" stroke-width="0.7"/><path d="M7.5 0.8v2.5h2.5" fill="#e8e8e8" stroke="#9a9a9a" stroke-width="0.6"/></svg>
<svg style="position:absolute;left:685.45px;top:40.9px" width="11.5" height="11.5" viewBox="0 0 12 12"><ellipse cx="8" cy="2" rx="3" ry="1.3" fill="#c8c8c8" stroke="#888" stroke-width="0.4"/><rect x="5" y="2" width="6" height="4.5" fill="#a8a8a8"/><path d="M0.5 3.5h3.5l1 1h4v6.5h-8.5z" fill="#a8a400"/><path d="M1.8 6.2h9.7l-1.8 5h-9.2z" fill="#e0dc00" stroke="#4a4800" stroke-width="0.6"/></svg>
<svg style="position:absolute;left:700.85px;top:40.9px" width="11.5" height="11.5" viewBox="0 0 12 12"><path d="M0.5 3.5h3.5l1 1h4.5v6.5h-9z" fill="#a8a400"/><path d="M1.8 6.2h9.7l-1.8 5h-9.2z" fill="#e0dc00" stroke="#4a4800" stroke-width="0.6"/><path d="M7.5 0.8l3 2.2" stroke="#333" stroke-width="0.9"/></svg>
<svg style="position:absolute;left:716.25px;top:40.9px" width="11.5" height="11.5" viewBox="0 0 12 12"><path d="M3.2 2.8q2.5-2 5.5 0.2" fill="none" stroke="#5a7ad0" stroke-width="1.5"/><path d="M8.8 9.2q-2.5 2-5.5-0.2" fill="none" stroke="#5a7ad0" stroke-width="1.5"/><path d="M9 3.5l1.5 3" stroke="#2a4ab0" stroke-width="1.3"/><path d="M3 8.5l-1.5-3" stroke="#2a4ab0" stroke-width="1.3"/></svg>
<svg style="position:absolute;left:732.25px;top:40.9px" width="11.5" height="11.5" viewBox="0 0 12 12"><path d="M0.5 6l4.5-4 6.5 4.5-4.5 4z" fill="#2a3a60" /><path d="M2 6l3-2.6 4.5 3-3 2.6z" fill="#6ca0d8"/><path d="M4 5l1.5-1.2 2 1.3-1.5 1.2z" fill="#e8f0f8"/></svg>
<svg style="position:absolute;left:747.45px;top:40.9px" width="11.5" height="11.5" viewBox="0 0 12 12"><rect x="0.8" y="3" width="10.4" height="7.5" rx="1.2" fill="#707070" stroke="#444" stroke-width="0.5"/><rect x="8.5" y="2" width="2" height="1.5" fill="#888"/><circle cx="6" cy="6.8" r="2.6" fill="#1a9a98" stroke="#d8d8d8" stroke-width="0.7"/></svg>
<div style="position:absolute;left:761.7px;top:39.0px;width:16.2px;height:15.3px;background:#cce4f7;border-radius:1px;"></div>
<svg style="position:absolute;left:763.95px;top:40.9px" width="11.5" height="11.5" viewBox="0 0 12 12"><path d="M2.5 1.5l6.5-1v10l-6.5 1z" fill="#a6a6a6"/><path d="M2.5 3l6.5-0.8M2.5 5l6.5-0.8M2.5 7l6.5-0.8M2.5 9l6.5-0.8" stroke="#c8c8c8" stroke-width="0.5"/><path d="M9 0.5l1.5 1v10l-1.5 0z" fill="#8a8a8a"/></svg>
<svg style="position:absolute;left:779.45px;top:40.9px" width="11.5" height="11.5" viewBox="0 0 12 12"><circle cx="6" cy="6" r="5" fill="#ececec" stroke="#aaa" stroke-width="0.7"/><path d="M1.2 5h9.6M1.2 7.5h9.6" stroke="#c0c0c0" stroke-width="0.5"/><rect x="3" y="5.3" width="6" height="2" fill="#b0b0b0"/></svg>
<svg style="position:absolute;left:799.1500000000001px;top:40.9px" width="11.5" height="11.5" viewBox="0 0 12 12"><path d="M1 3.5h7v7.5h-7z M1 3.5l2.5-2.5h7l-2.5 2.5 M8 11l2.5-2.5v-7.5" fill="none" stroke="#8a8a8a" stroke-width="0.7"/></svg>
<div style="position:absolute;left:813.0px;top:39.0px;width:16.2px;height:15.3px;background:#cce4f7;border-radius:1px;"></div>
<svg style="position:absolute;left:815.25px;top:40.9px" width="11.5" height="11.5" viewBox="0 0 12 12"><g stroke="#333" stroke-width="0.8" stroke-linecap="round"><path d="M1.5 3.2l1.2-1M9 3.2l1.2-1M1.5 10l1.2-1M9 10l1.2-1"/></g><g fill="#333"><circle cx="4.6" cy="3" r="0.5"/><circle cx="6.8" cy="2" r="0.5"/><circle cx="4.6" cy="9.8" r="0.5"/><circle cx="6.8" cy="8.8" r="0.5"/></g></svg>
<svg style="position:absolute;left:830.25px;top:40.9px" width="11.5" height="11.5" viewBox="0 0 12 12"><path d="M3 1.5q3-1 6 0v9q-3 1-6 0z" fill="#fff" stroke="#222" stroke-width="0.8"/><path d="M4.3 2.2v7.6M7.7 2.2v7.6M4.3 3l1.7 3 1.7-3M4.3 9l1.7-3 1.7 3" fill="none" stroke="#222" stroke-width="0.6"/></svg>
<svg style="position:absolute;left:846.1500000000001px;top:40.9px" width="11.5" height="11.5" viewBox="0 0 12 12"><path d="M2.5 2q3.5-1.5 7 0v8q-3.5 1.5-7 0z" fill="#a8cdf0"/><path d="M4.5 1.6h2.5v9.2h-2.5z" fill="#f2f8fe"/><path d="M8 1.8h1.5v8.5h-1.5z" fill="#80b4e8"/></svg>
<svg style="position:absolute;left:861.75px;top:40.9px" width="11.5" height="11.5" viewBox="0 0 12 12"><path d="M2.5 2q3.5-1.5 7 0v8q-3.5 1.5-7 0z" fill="#80b4e8"/><path d="M2.5 2h3v8.5h-3z" fill="#c8e0f8"/><path d="M2.5 2q3.5-1.5 7 0q-3.5 1.2-7 0z" fill="#b0d4f4"/></svg>
<svg style="position:absolute;left:884.45px;top:40.9px" width="11.5" height="11.5" viewBox="0 0 12 12"><ellipse cx="6" cy="3" rx="5" ry="2" fill="#8a8a8a"/><rect x="1" y="3" width="10" height="5" fill="#777"/><ellipse cx="6" cy="8" rx="5" ry="2" fill="#666"/><path d="M1 5h10M1 6.5h10" stroke="#aaa" stroke-width="0.5"/></svg>
<svg style="position:absolute;left:900.6500000000001px;top:40.9px" width="11.5" height="11.5" viewBox="0 0 12 12"><path d="M6 0.5v11" stroke="#6c6" stroke-width="0.9"/><path d="M0.5 5l11 2" stroke="#d55" stroke-width="0.9"/><path d="M0.5 8l11-4" stroke="#55d" stroke-width="0.9"/></svg>
<svg style="position:absolute;left:921.75px;top:40.9px" width="11.5" height="11.5" viewBox="0 0 12 12"><circle cx="6" cy="6" r="5" fill="none" stroke="#999" stroke-width="0.8"/><ellipse cx="6" cy="6" rx="2" ry="5" fill="none" stroke="#999" stroke-width="0.6"/><path d="M1 6h10M2 3.5h8M2 8.5h8" stroke="#999" stroke-width="0.6"/></svg>
<svg style="position:absolute;left:937.85px;top:40.9px" width="11.5" height="11.5" viewBox="0 0 12 12"><circle cx="6" cy="6" r="5.6" fill="#f4f000" stroke="#222" stroke-width="0.8"/><text x="6" y="9.3" font-size="8.5" text-anchor="middle" fill="#111" font-family="Liberation Serif">A</text></svg>
<svg style="position:absolute;left:953.45px;top:40.9px" width="11.5" height="11.5" viewBox="0 0 12 12"><rect x="0.5" y="0.5" width="11" height="11" fill="#fff"/><path d="M5 7l-4 4" stroke="#3a9ae8" stroke-width="1"/><path d="M5 7h6" stroke="#e55" stroke-width="1"/><path d="M5 7v-6" stroke="#5c5" stroke-width="1"/></svg>
<svg style="position:absolute;left:969.25px;top:40.9px" width="11.5" height="11.5" viewBox="0 0 12 12"><ellipse cx="5" cy="8" rx="4" ry="3.2" fill="#d8d000" stroke="#555" stroke-width="0.6"/><path d="M5 5l5-4 1.5 1.5-4 4z" fill="#c8c000" stroke="#555" stroke-width="0.6"/><ellipse cx="4.2" cy="8.5" rx="1.5" ry="1.8" fill="#333"/></svg>
<svg style="position:absolute;left:984.6500000000001px;top:40.9px" width="11.5" height="11.5" viewBox="0 0 12 12"><rect x="1" y="3" width="10" height="6" rx="1.5" fill="#c8c8c8" stroke="#999" stroke-width="0.5"/><circle cx="6" cy="6" r="2" fill="#999"/><rect x="3" y="10" width="6" height="1" fill="#bbb"/></svg>
<svg style="position:absolute;left:1000.1500000000001px;top:40.9px" width="11.5" height="11.5" viewBox="0 0 12 12"><path d="M11 0.8l-6 6.5" stroke="#b06020" stroke-width="1.4"/><path d="M5 6.5l-1.5 1.5q-1 2-2.8 3.2q2.5 0 4-1.5l1.3-2z" fill="#222"/></svg>
<svg style="position:absolute;left:1015.95px;top:40.9px" width="11.5" height="11.5" viewBox="0 0 12 12"><rect x="0" y="0" width="12" height="12" fill="#5a5a5a"/><rect x="0" y="0" width="12" height="5" fill="#777"/><text x="-0.3" y="8.5" font-size="10" fill="#000" font-style="italic" font-weight="bold" font-family="Liberation Serif">P</text><text x="4.2" y="12" font-size="10" fill="#e8141e" font-style="italic" font-weight="bold" font-family="Liberation Serif">P</text></svg>
<svg style="position:absolute;left:1031.95px;top:40.9px" width="11.5" height="11.5" viewBox="0 0 12 12"><rect x="0.5" y="0.5" width="11" height="11" fill="#e8e8e8"/><g fill="#c33"><circle cx="2.5" cy="2.5" r="0.9"/><circle cx="6" cy="4" r="0.7"/></g><g fill="#333"><circle cx="5" cy="8" r="0.7"/><circle cx="9" cy="6" r="0.7"/><circle cx="3" cy="6" r="0.6"/></g><path d="M7.5 7l2.5 4" stroke="#555" stroke-width="0.7"/></svg>
<svg style="position:absolute;left:1047.45px;top:40.9px" width="11.5" height="11.5" viewBox="0 0 12 12"><ellipse cx="6" cy="4" rx="5.5" ry="2.5" fill="#d0d0e0" stroke="#8888a8" stroke-width="0.6"/><g fill="#c33"><circle cx="2" cy="3" r="0.8"/><circle cx="8" cy="2" r="0.8"/></g><path d="M7 7l3 4M5 9h3" stroke="#555" stroke-width="0.7"/></svg>
<svg style="position:absolute;left:1062.95px;top:40.9px" width="11.5" height="11.5" viewBox="0 0 12 12"><path d="M1.5 11.5q-0.5-5 3.5-6l-1-4.5 2 0.5 1 4q4.5 1 4 6z" fill="#c848c8"/><path d="M1.8 11.5q0-3 2.5-4h5.5q1.7 1.5 1.7 4z" fill="#50c850"/><path d="M2.3 10h8.5" stroke="#f0e000" stroke-width="1"/><path d="M3 8.5h7.5" stroke="#4060ff" stroke-width="0.9"/><path d="M4.5 6.8h5" stroke="#ff4040" stroke-width="0.8"/></svg>
<svg style="position:absolute;left:1079.15px;top:40.9px" width="11.5" height="11.5" viewBox="0 0 12 12"><path d="M6 2.2v7.3M1.5 3.8l9 4M10.5 3.8l-9 4" stroke="#ee1a1a" stroke-width="2.4"/><circle cx="6" cy="1.6" r="1.3" fill="#2a6ae0"/><text x="6" y="11.8" font-size="2.8" text-anchor="middle" fill="#333" font-family="Liberation Sans">GEOMET</text></svg>
<svg style="position:absolute;left:1093.95px;top:40.9px" width="11.5" height="11.5" viewBox="0 0 12 12"><circle cx="6" cy="6" r="5.6" fill="#f0f000" stroke="#222" stroke-width="0.9"/><text x="6" y="9.5" font-size="9" text-anchor="middle" fill="#111" font-style="italic" font-weight="bold" font-family="Liberation Serif">i</text></svg>
<svg style="position:absolute;left:1110.35px;top:40.9px" width="11.5" height="11.5" viewBox="0 0 12 12"><path d="M0.5 1.5h6v4h-6z" fill="none" stroke="#888" stroke-width="0.5" stroke-dasharray="1 0.6"/><circle cx="2" cy="3" r="0.8" fill="#c33"/><path d="M6 6l1 5 1.2-2 2.3 1.5" fill="none" stroke="#333" stroke-width="0.7"/><circle cx="10" cy="2" r="0.6" fill="#555"/></svg>
<svg style="position:absolute;left:1125.75px;top:40.9px" width="11.5" height="11.5" viewBox="0 0 12 12"><path d="M1 2.5l8-1.5-2 6z" fill="#e06060" stroke="#666" stroke-width="0.5"/><path d="M3 3l4 0M2.5 4.5l4 0" stroke="#a03030" stroke-width="0.4"/><path d="M1 1.5h10v6h-10z" fill="none" stroke="#888" stroke-width="0.5" stroke-dasharray="1 0.6"/><path d="M7 7l1 4 1-1.5 2 1" fill="none" stroke="#333" stroke-width="0.7"/></svg>
<svg style="position:absolute;left:1141.45px;top:40.9px" width="11.5" height="11.5" viewBox="0 0 12 12"><path d="M1.5 7l4-6 4 5z" fill="#e06060" stroke="#666" stroke-width="0.5"/><path d="M3.5 4l3 0.5M2.8 5.5l4 0" stroke="#a03030" stroke-width="0.4"/><path d="M1 1h10v7h-10z" fill="none" stroke="#888" stroke-width="0.5" stroke-dasharray="1 0.6"/><path d="M7 7l1 4 1-1.5 2 1" fill="none" stroke="#333" stroke-width="0.7"/></svg>
<svg style="position:absolute;left:1157.25px;top:40.9px" width="11.5" height="11.5" viewBox="0 0 12 12"><path d="M1 3l6-2 4 4-3 1 2 5-2 0-2-4-3 2z" fill="#fff" stroke="#999" stroke-width="0.7"/></svg>
<svg style="position:absolute;left:1181.95px;top:40.9px" width="11.5" height="11.5" viewBox="0 0 12 12"><path d="M1.5 1.5l9 9M10.5 1.5l-9 9" stroke="#e8141e" stroke-width="1.1"/><circle cx="2.5" cy="9.5" r="0.9" fill="#333"/><circle cx="9.5" cy="2.5" r="0.9" fill="#333"/><circle cx="6" cy="10.8" r="0.7" fill="#333"/></svg>
<svg style="position:absolute;left:1198.25px;top:40.9px" width="11.5" height="11.5" viewBox="0 0 12 12"><path d="M3 4l3-2.5 3 2.5-1 4h-4z" fill="#c05050" opacity="0.7"/><path d="M2 2l8 8M10 2l-8 8" stroke="#e8141e" stroke-width="1.3"/></svg>
<svg style="position:absolute;left:1213.25px;top:40.9px" width="11.5" height="11.5" viewBox="0 0 12 12"><path d="M3 5l3-3 3 3-3 4z" fill="#444"/><path d="M1.5 1.5l9 9M10.5 1.5l-9 9" stroke="#e8141e" stroke-width="1.3"/><circle cx="6" cy="10.5" r="0.8" fill="#333"/></svg>
<div style="position:absolute;left:794.7px;top:39.2px;width:0.8px;height:16px;background:#d8d8d8;"></div>
<div style="position:absolute;left:877.8000000000001px;top:39.2px;width:0.8px;height:16px;background:#d8d8d8;"></div>
<div style="position:absolute;left:914.8000000000001px;top:39.2px;width:0.8px;height:16px;background:#d8d8d8;"></div>
<div style="position:absolute;left:1174.2px;top:39.2px;width:0.8px;height:16px;background:#d8d8d8;"></div>
<div style="position:absolute;left:1227.2px;top:39.2px;width:0.8px;height:16px;background:#d8d8d8;"></div>
<svg style="position:absolute;left:665.2px;top:39.7px" width="2" height="15"><path d="M1 0.5v14" stroke="#8a8a8a" stroke-width="0.9" stroke-dasharray="0.9 1.1"/></svg>
<svg style="position:absolute;left:879.7px;top:39.7px" width="2" height="15"><path d="M1 0.5v14" stroke="#8a8a8a" stroke-width="0.9" stroke-dasharray="0.9 1.1"/></svg>
<svg style="position:absolute;left:917.2px;top:39.7px" width="2" height="15"><path d="M1 0.5v14" stroke="#8a8a8a" stroke-width="0.9" stroke-dasharray="0.9 1.1"/></svg>
<svg style="position:absolute;left:1176.7px;top:39.7px" width="2" height="15"><path d="M1 0.5v14" stroke="#8a8a8a" stroke-width="0.9" stroke-dasharray="0.9 1.1"/></svg>
<svg style="position:absolute;left:1270.0px;top:40.2px" width="12" height="12" viewBox="0 0 12 12"><circle cx="4.5" cy="4.5" r="3.6" fill="none" stroke="#aaa" stroke-width="1"/><path d="M7 7l4 4" stroke="#aaa" stroke-width="1.3"/></svg>
<div style="position:absolute;left:663.2px;top:57.5px;width:347px;height:451.5px;background:linear-gradient(#000000 0px, #7373e6 404.5px);"></div>
<div style="position:absolute;left:1010.2px;top:57.5px;width:274.79999999999995px;height:451.5px;background:#f0f0f0;"></div>
<svg style="position:absolute;left:663.2px;top:57.5px" width="347" height="451.5"><defs><clipPath id="c663"><path d="M165.8 165.2 Q167.8 203.5 172.8 241.9 L255.6 243.9 L255.6 159.1Z"/></clipPath></defs><path d="M165.8 165.2 Q167.8 203.5 172.8 241.9 L255.6 243.9 L255.6 159.1Z" fill="#514634"/><g clip-path="url(#c663)"><path d="M185.2 181.7H198.0L201.6 185.3V201.1L198.0 204.7H185.2L181.6 201.1V185.3Z" fill="#4a4890"/><path d="M184.8 181.0H197.6L201.2 184.6V200.4L197.6 204.0H184.8L181.2 200.4V184.6Z" fill="#2e2c2a" opacity="0.6"/><path d="M184.4 180.5H196.7L200.3 184.1V199.4L196.7 203.0H184.4L180.8 199.4V184.1Z" fill="#626466" stroke="#22c022" stroke-width="1.3" stroke-dasharray="2.5 0.8"/><circle cx="182.8" cy="182.5" r="0.45" fill="#e8e8e8"/><circle cx="188.7" cy="194.1" r="0.45" fill="#e8e8e8"/><circle cx="194.6" cy="186.7" r="0.45" fill="#e8e8e8"/><circle cx="184.6" cy="198.3" r="0.45" fill="#e8e8e8"/><circle cx="190.5" cy="190.9" r="0.45" fill="#e8e8e8"/><circle cx="196.4" cy="183.4" r="0.45" fill="#e8e8e8"/><circle cx="186.3" cy="195.0" r="0.45" fill="#e8e8e8"/><circle cx="192.2" cy="187.6" r="0.45" fill="#e8e8e8"/><circle cx="198.2" cy="199.2" r="0.45" fill="#e8e8e8"/><circle cx="187.8" cy="194.8" r="1.3" fill="#1e1e28"/><circle cx="193.2" cy="187.9" r="1.3" fill="#1e1e28"/><path d="M213.3 174.7H229.8L232.9 177.8V188.8L229.8 191.9H213.3L210.2 188.8V177.8Z" fill="#4a4890"/><path d="M212.9 174.0H229.4L232.5 177.1V188.1L229.4 191.2H212.9L209.8 188.1V177.1Z" fill="#2e2c2a" opacity="0.6"/><path d="M212.5 173.5H228.5L231.6 176.6V187.1L228.5 190.2H212.5L209.4 187.1V176.6Z" fill="#626466" stroke="#22c022" stroke-width="1.3" stroke-dasharray="2.5 0.8"/><circle cx="211.4" cy="175.5" r="0.45" fill="#e8e8e8"/><circle cx="218.3" cy="183.6" r="0.45" fill="#e8e8e8"/><circle cx="225.2" cy="178.4" r="0.45" fill="#e8e8e8"/><circle cx="213.5" cy="186.5" r="0.45" fill="#e8e8e8"/><circle cx="220.4" cy="181.3" r="0.45" fill="#e8e8e8"/><circle cx="227.3" cy="176.2" r="0.45" fill="#e8e8e8"/><circle cx="215.5" cy="184.2" r="0.45" fill="#e8e8e8"/><circle cx="222.4" cy="179.1" r="0.45" fill="#e8e8e8"/><circle cx="229.4" cy="187.1" r="0.45" fill="#e8e8e8"/><circle cx="217.3" cy="184.2" r="1.3" fill="#1e1e28"/><circle cx="223.5" cy="179.0" r="1.3" fill="#1e1e28"/><path d="M213.7 198.7H231.8L234.9 201.8V212.6L231.8 215.7H213.7L210.6 212.6V201.8Z" fill="#4a4890"/><path d="M213.3 198.0H231.4L234.5 201.1V211.9L231.4 215.0H213.3L210.2 211.9V201.1Z" fill="#2e2c2a" opacity="0.6"/><path d="M212.9 197.5H230.5L233.6 200.6V210.9L230.5 214.0H212.9L209.8 210.9V200.6Z" fill="#5c5f61"/><circle cx="218.3" cy="208.0" r="1.3" fill="#1e1e28"/><circle cx="224.9" cy="202.9" r="1.3" fill="#1e1e28"/><path d="M188.0 215.0H200.2L203.6 218.4V235.7L200.2 239.1H188.0L184.6 235.7V218.4Z" fill="#4a4890"/><path d="M187.6 214.3H199.8L203.2 217.7V235.0L199.8 238.4H187.6L184.2 235.0V217.7Z" fill="#2e2c2a" opacity="0.6"/><path d="M187.2 213.8H198.9L202.3 217.2V234.0L198.9 237.4H187.2L183.8 234.0V217.2Z" fill="#5c5f61"/><circle cx="190.4" cy="228.7" r="1.3" fill="#1e1e28"/><circle cx="195.6" cy="221.5" r="1.3" fill="#1e1e28"/><path d="M213.9 222.0H231.6L234.9 225.3V236.8L231.6 240.1H213.9L210.6 236.8V225.3Z" fill="#4a4890"/><path d="M213.5 221.3H231.2L234.5 224.6V236.1L231.2 239.4H213.5L210.2 236.1V224.6Z" fill="#2e2c2a" opacity="0.6"/><path d="M213.1 220.8H230.3L233.6 224.1V235.1L230.3 238.4H213.1L209.8 235.1V224.1Z" fill="#5c5f61"/><circle cx="218.3" cy="232.0" r="1.3" fill="#1e1e28"/><circle cx="224.9" cy="226.6" r="1.3" fill="#1e1e28"/><circle cx="252.8" cy="190.1" r="11.6" fill="#3c3b38"/><circle cx="252.8" cy="190.1" r="8.4" fill="none" stroke="#5e5c58" stroke-width="3.5" stroke-dasharray="2.5 2"/><circle cx="252.8" cy="190.1" r="4.9" fill="#64625e"/><circle cx="252.0" cy="190.1" r="2.8" fill="#24221e"/><circle cx="251.8" cy="224.3" r="11.5" fill="#3c3b38"/><circle cx="251.8" cy="224.3" r="8.3" fill="none" stroke="#5e5c58" stroke-width="3.4" stroke-dasharray="2.5 2"/><circle cx="251.8" cy="224.3" r="4.8" fill="#64625e"/><circle cx="251.0" cy="224.3" r="2.8" fill="#24221e"/></g></svg>
<svg style="position:absolute;left:663.2px;top:57.5px" width="347" height="451.5"><circle cx="173.5" cy="225.35" r="128.9" fill="none" stroke="#9a9ab0" stroke-opacity="0.36" stroke-width="0.9"/><line x1="36.1" y1="225.35" x2="310.9" y2="225.35" stroke="#b8c8b0" stroke-opacity="0.6" stroke-width="1"/><line x1="173.5" y1="88.3" x2="173.5" y2="363.2" stroke="#c8a0b0" stroke-opacity="0.55" stroke-width="0.9"/></svg>
<svg style="position:absolute;left:893.8px;top:352.4px" width="58" height="9"><path transform="translate(0.00,0) scale(0.975)" d="M0.5 2.5h2.5M1.8 0.5v7l-0.8-0.6M0.5 5.5l2.5-1.2M3.5 2h4.3M5.6 0.5l-2 3M5.6 2l2 1.5M4 4h3.5v2.5h-3.5zM4 5.2h3.5M5.7 4v3.5h2" stroke="#e4505c" stroke-width="0.85" fill="none"/><path transform="translate(8.05,0) scale(0.975)" d="M0.7 0.8h2v6.7M0.7 0.8v6.2l-0.3 0.5M0.7 3h2M0.7 5h2M3.3 1.2h4.5M4.5 0.3v1.8M6.6 0.3v1.8M3.8 2.6h3.4v2.2h-3.4zM3.8 3.7h3.4M3.3 5.7h4.5M5.5 4.8l-2 2.9M5.5 5.7l2.3 2" stroke="#e4505c" stroke-width="0.85" fill="none"/><path transform="translate(16.10,0) scale(0.975)" d="M0.3 1.5h4M0.3 4h4M1.5 1.5v2.5l-1 3.5M3.2 1.5v6M7.5 0.5l-2.5 2M7.5 2.8l-2.5 2M7.8 5l-3.3 2.8" stroke="#e4505c" stroke-width="0.85" fill="none"/><path transform="translate(24.15,0) scale(0.975)" d="M0.3 2.5h7.5M5.5 0.3c0 3 0.5 5.5 2.3 7.2M6.8 0.6l0.8 0.8M0.8 4.2h3.4M2.5 4.2v3M0.3 7.3h4.3" stroke="#e4505c" stroke-width="0.85" fill="none"/><path transform="translate(32.20,0) scale(0.975)" d="M3 2.5h4.8M6.3 0.3v7l-0.8-0.5M4 4l0.8 1.2M0.8 0.8l0.8 0.8M0.3 3h1.5v3l-1 1M0.8 6.5c1.5 1 4 1.2 7.2 1" stroke="#e4505c" stroke-width="0.85" fill="none"/><path transform="translate(40.25,0) scale(0.975)" d="M0.5 0.8l0.8 0.7M0.3 2.8l0.8 0.7M0.3 7l1.2-2.5M4.5 0.3v1.2h3M2.5 2h5.3M2.5 2v3c0 1-0.3 2-0.7 2.7M3.5 3.2h4M3.5 3.2v1.3h4M3 6l0.3 1.2M4 5.5v2h2.5M5.3 5l0.5 0.8M7.5 5.8l0.3 1" stroke="#e4505c" stroke-width="0.85" fill="none"/><path transform="translate(48.30,0) scale(0.975)" d="M7 0.5c-2 0.5-4.5 0.8-5.8 0.8M1.2 1.3v3c0 1.5-0.3 2.7-1 3.8M1.2 3h6.5M2.8 4.8h4.5v2.8h-4.5z" stroke="#e4505c" stroke-width="0.85" fill="none"/></svg>
<div style="position:absolute;left:663.2px;top:462.0px;width:347px;height:47px;background:#7e4686;"></div>
<div class="s" style="left:697.7265px;top:462.67px;height:8.06px;line-height:8.06px;font-size:6.2px;color:#e0d8e6;font-weight:normal;transform:scaleX(0.96);transform-origin:0 0;">FOV: 60</div>
<div class="s" style="left:697.7265px;top:470.27px;height:8.06px;line-height:8.06px;font-size:6.2px;color:#e0d8e6;font-weight:normal;transform:scaleX(0.96);transform-origin:0 0;">FPS:   196.1</div>
<div class="s" style="left:697.7265px;top:477.87px;height:8.06px;line-height:8.06px;font-size:6.2px;color:#e0d8e6;font-weight:normal;transform:scaleX(0.96);transform-origin:0 0;">BO_RENDERING</div>
<div class="s" style="left:837.4000000000001px;top:462.60px;height:8.19px;line-height:8.19px;font-size:6.3px;color:#e0d8e6;font-weight:normal;transform:scaleX(0.985);transform-origin:0 0;">Current Mesh: 20250701171018382_instance-pcd-0</div>
<div class="s" style="left:837.4000000000001px;top:470.20px;height:8.19px;line-height:8.19px;font-size:6.3px;color:#e0d8e6;font-weight:normal;transform:scaleX(0.985);transform-origin:0 0;">Vertices: 143,097   (171,347)</div>
<div class="s" style="left:837.4000000000001px;top:477.80px;height:8.19px;line-height:8.19px;font-size:6.3px;color:#e0d8e6;font-weight:normal;transform:scaleX(0.985);transform-origin:0 0;">Faces: 0   (0)</div>
<div class="s" style="left:837.4000000000001px;top:485.40px;height:8.19px;line-height:8.19px;font-size:6.3px;color:#e0d8e6;font-weight:normal;transform:scaleX(0.985);transform-origin:0 0;">Selection: v: 0 f: 0</div>
<div class="s" style="left:837.4000000000001px;top:493.00px;height:8.19px;line-height:8.19px;font-size:6.3px;color:#e0d8e6;font-weight:normal;transform:scaleX(0.985);transform-origin:0 0;">VC</div>
<div style="position:absolute;left:1012.7px;top:57.1px;width:272.29999999999995px;height:10.3px;background:#dadada;border-top:0.6px solid #d2d2d2;border-bottom:0.6px solid #d4d4d4;box-sizing:border-box;"></div>
<div class="s" style="left:1015.0px;top:58.68px;height:8.84px;line-height:8.84px;font-size:6.8px;color:#333;font-weight:normal;transform:scaleX(0.9);transform-origin:0 0;-webkit-text-stroke:0.12px #333;">Project_1</div>
<svg style="position:absolute;left:1266.0px;top:60.0px;" width="6" height="5" viewBox="0 0 6 5"><rect x="1.5" y="0.5" width="4" height="3" fill="none" stroke="#555" stroke-width="0.8"/><rect x="0.5" y="1.5" width="4" height="3" fill="#dedede" stroke="#555" stroke-width="0.8"/></svg>
<svg style="position:absolute;left:1277.0px;top:60.0px;" width="5" height="5" viewBox="0 0 5 5"><path d="M0.5 0.5L4.5 4.5M4.5 0.5L0.5 4.5" stroke="#333" stroke-width="0.9"/></svg>
<div style="position:absolute;left:1017.2px;top:72.8px;width:263.29999999999995px;height:183.2px;background:#fff;border:1px solid #c4c4c4;box-sizing:border-box;"></div>
<div style="position:absolute;left:1018.2px;top:247.0px;width:261.29999999999995px;height:8px;background:#f0f0f0;"></div>
<div style="position:absolute;left:1026.2px;top:251.4px;width:244.29999999999995px;height:1px;background:#606060;"></div>
<svg style="position:absolute;left:1019.2px;top:77.6px;" width="4" height="5" viewBox="0 0 4 5"><path d="M0.5 0.5L3 2.5L0.5 4.5" fill="none" stroke="#666" stroke-width="0.7"/></svg>
<div style="position:absolute;left:1024.0px;top:75.39999999999999px;width:8.4px;height:9.2px;background:#e6e6e6;border:0.5px solid #cfcfcf;box-sizing:border-box;"></div>
<svg style="position:absolute;left:1024.4px;top:76.1px" width="7.5" height="7.5" viewBox="0 0 12 12"><ellipse cx="6" cy="6" rx="4.6" ry="3.1" fill="#3a3a3a"/><ellipse cx="6" cy="6.1" rx="3.8" ry="2.5" fill="#22e622"/><circle cx="5.6" cy="5.4" r="1.2" fill="#111"/></svg>
<div class="s" style="left:1035.0px;top:76.05px;height:9.10px;line-height:9.10px;font-size:7px;color:#444;font-weight:normal;transform:scaleX(0.917);transform-origin:0 0;-webkit-text-stroke:0.1px #444;">0</div>
<div class="s" style="left:1048.2px;top:76.05px;height:9.10px;line-height:9.10px;font-size:7px;color:#333;font-weight:normal;transform:scaleX(0.917);transform-origin:0 0;-webkit-text-stroke:0.1px #333;">20250701171018382_instance-1_model-cpfv-0</div>
<svg style="position:absolute;left:1211.0px;top:75.6px" width="9" height="9" viewBox="0 0 12 12"><path d="M1 3.5h7v7.5h-7z M1 3.5l2.5-2.5h7l-2.5 2.5 M8 11l2.5-2.5v-7.5" fill="none" stroke="#8a8a8a" stroke-width="0.7"/></svg>
<div style="position:absolute;left:1221.2px;top:74.6px;width:11.6px;height:11px;background:#cce8ff;border:0.5px solid #99d1ff;box-sizing:border-box;border-radius:1px;"></div>
<svg style="position:absolute;left:1222.0px;top:75.6px" width="10" height="10" viewBox="0 0 12 12"><g stroke="#333" stroke-width="0.8" stroke-linecap="round"><path d="M1.5 3.2l1.2-1M9 3.2l1.2-1M1.5 10l1.2-1M9 10l1.2-1"/></g><g fill="#333"><circle cx="4.6" cy="3" r="0.5"/><circle cx="6.8" cy="2" r="0.5"/><circle cx="4.6" cy="9.8" r="0.5"/><circle cx="6.8" cy="8.8" r="0.5"/></g></svg>
<svg style="position:absolute;left:1233.7px;top:75.6px" width="9.5" height="9.5" viewBox="0 0 12 12"><path d="M3 1.5q3-1 6 0v9q-3 1-6 0z" fill="#fff" stroke="#222" stroke-width="0.8"/><path d="M4.3 2.2v7.6M7.7 2.2v7.6M4.3 3l1.7 3 1.7-3M4.3 9l1.7-3 1.7 3" fill="none" stroke="#222" stroke-width="0.6"/></svg>
<svg style="position:absolute;left:1245.7px;top:75.6px" width="9" height="9" viewBox="0 0 12 12"><path d="M2.5 2q3.5-1.5 7 0v8q-3.5 1.5-7 0z" fill="#80b4e8"/><path d="M2.5 2h3v8.5h-3z" fill="#c8e0f8"/><path d="M2.5 2q3.5-1.5 7 0q-3.5 1.2-7 0z" fill="#b0d4f4"/></svg>
<div style="position:absolute;left:1256.2px;top:74.6px;width:11px;height:11px;background:#cce8ff;border:0.5px solid #99d1ff;box-sizing:border-box;border-radius:1px;"></div>
<svg style="position:absolute;left:1257.7px;top:75.89999999999999px;" width="8" height="8.5" viewBox="0 0 8 8.5"><rect x="3.5" y="1" width="3.5" height="7" fill="#f4f8fc" stroke="#aaa" stroke-width="0.4"/><path d="M1.3 8.2l2.8-6.2h-1.6l0.6-1.3h3.3l-3.2 7.5z" fill="#e84050"/></svg>
<div style="position:absolute;left:1267.4px;top:74.6px;width:11.8px;height:11px;background:#cce8ff;border:0.5px solid #99d1ff;box-sizing:border-box;border-radius:1px;"></div>
<svg style="position:absolute;left:1268.9px;top:76.1px;" width="9" height="8" viewBox="0 0 9 8"><rect x="0.6" y="0.6" width="7.8" height="6.8" rx="2.4" fill="#5a5a5a"/><rect x="1.8" y="1.8" width="5.4" height="4.4" rx="1.2" fill="#a8dcb0"/><path d="M2.5 2.5l2 1.5-2 1.5zM6.5 2.5l-2 1.5 2 1.5z" fill="#3a9a4a"/></svg>
<svg style="position:absolute;left:1019.2px;top:90.6px;" width="4" height="5" viewBox="0 0 4 5"><path d="M0.5 0.5L3 2.5L0.5 4.5" fill="none" stroke="#666" stroke-width="0.7"/></svg>
<div style="position:absolute;left:1024.0px;top:88.39999999999999px;width:8.4px;height:9.2px;background:#e6e6e6;border:0.5px solid #cfcfcf;box-sizing:border-box;"></div>
<svg style="position:absolute;left:1024.4px;top:89.1px" width="7.5" height="7.5" viewBox="0 0 12 12"><ellipse cx="6" cy="6" rx="4.6" ry="3.1" fill="#3a3a3a"/><ellipse cx="6" cy="6.1" rx="3.8" ry="2.5" fill="#22e622"/><circle cx="5.6" cy="5.4" r="1.2" fill="#111"/></svg>
<div class="s" style="left:1035.0px;top:89.05px;height:9.10px;line-height:9.10px;font-size:7px;color:#444;font-weight:normal;transform:scaleX(0.917);transform-origin:0 0;-webkit-text-stroke:0.1px #444;">1</div>
<div class="s" style="left:1048.2px;top:89.05px;height:9.10px;line-height:9.10px;font-size:7px;color:#333;font-weight:normal;transform:scaleX(0.917);transform-origin:0 0;-webkit-text-stroke:0.1px #333;">20250701171018382_instance-1_scene-cpfv-0</div>
<svg style="position:absolute;left:1211.0px;top:88.6px" width="9" height="9" viewBox="0 0 12 12"><path d="M1 3.5h7v7.5h-7z M1 3.5l2.5-2.5h7l-2.5 2.5 M8 11l2.5-2.5v-7.5" fill="none" stroke="#8a8a8a" stroke-width="0.7"/></svg>
<div style="position:absolute;left:1221.2px;top:87.6px;width:11.6px;height:11px;background:#cce8ff;border:0.5px solid #99d1ff;box-sizing:border-box;border-radius:1px;"></div>
<svg style="position:absolute;left:1222.0px;top:88.6px" width="10" height="10" viewBox="0 0 12 12"><g stroke="#333" stroke-width="0.8" stroke-linecap="round"><path d="M1.5 3.2l1.2-1M9 3.2l1.2-1M1.5 10l1.2-1M9 10l1.2-1"/></g><g fill="#333"><circle cx="4.6" cy="3" r="0.5"/><circle cx="6.8" cy="2" r="0.5"/><circle cx="4.6" cy="9.8" r="0.5"/><circle cx="6.8" cy="8.8" r="0.5"/></g></svg>
<svg style="position:absolute;left:1233.7px;top:88.6px" width="9.5" height="9.5" viewBox="0 0 12 12"><path d="M3 1.5q3-1 6 0v9q-3 1-6 0z" fill="#fff" stroke="#222" stroke-width="0.8"/><path d="M4.3 2.2v7.6M7.7 2.2v7.6M4.3 3l1.7 3 1.7-3M4.3 9l1.7-3 1.7 3" fill="none" stroke="#222" stroke-width="0.6"/></svg>
<svg style="position:absolute;left:1245.7px;top:88.6px" width="9" height="9" viewBox="0 0 12 12"><path d="M2.5 2q3.5-1.5 7 0v8q-3.5 1.5-7 0z" fill="#80b4e8"/><path d="M2.5 2h3v8.5h-3z" fill="#c8e0f8"/><path d="M2.5 2q3.5-1.5 7 0q-3.5 1.2-7 0z" fill="#b0d4f4"/></svg>
<div style="position:absolute;left:1256.2px;top:87.6px;width:11px;height:11px;background:#cce8ff;border:0.5px solid #99d1ff;box-sizing:border-box;border-radius:1px;"></div>
<svg style="position:absolute;left:1257.7px;top:88.89999999999999px;" width="8" height="8.5" viewBox="0 0 8 8.5"><rect x="3.5" y="1" width="3.5" height="7" fill="#f4f8fc" stroke="#aaa" stroke-width="0.4"/><path d="M1.3 8.2l2.8-6.2h-1.6l0.6-1.3h3.3l-3.2 7.5z" fill="#e84050"/></svg>
<div style="position:absolute;left:1267.4px;top:87.6px;width:11.8px;height:11px;background:#cce8ff;border:0.5px solid #99d1ff;box-sizing:border-box;border-radius:1px;"></div>
<svg style="position:absolute;left:1268.9px;top:89.1px;" width="9" height="8" viewBox="0 0 9 8"><rect x="0.6" y="0.6" width="7.8" height="6.8" rx="2.4" fill="#5a5a5a"/><rect x="1.8" y="1.8" width="5.4" height="4.4" rx="1.2" fill="#a8dcb0"/><path d="M2.5 2.5l2 1.5-2 1.5zM6.5 2.5l-2 1.5 2 1.5z" fill="#3a9a4a"/></svg>
<svg style="position:absolute;left:1019.2px;top:103.6px;" width="4" height="5" viewBox="0 0 4 5"><path d="M0.5 0.5L3 2.5L0.5 4.5" fill="none" stroke="#666" stroke-width="0.7"/></svg>
<div style="position:absolute;left:1024.0px;top:101.39999999999999px;width:8.4px;height:9.2px;background:#e6e6e6;border:0.5px solid #cfcfcf;box-sizing:border-box;"></div>
<svg style="position:absolute;left:1025.0px;top:102.6px;" width="6.5" height="7" viewBox="0 0 6.5 7"><path d="M0.3 5.2q2.8 1.2 5.8 -1.2" fill="none" stroke="#333" stroke-width="0.7"/></svg>
<div class="s" style="left:1035.0px;top:102.05px;height:9.10px;line-height:9.10px;font-size:7px;color:#444;font-weight:normal;transform:scaleX(0.917);transform-origin:0 0;-webkit-text-stroke:0.1px #444;">2</div>
<div class="s" style="left:1048.2px;top:102.05px;height:9.10px;line-height:9.10px;font-size:7px;color:#333;font-weight:normal;transform:scaleX(0.917);transform-origin:0 0;-webkit-text-stroke:0.1px #333;">20250701171018382_instance-2_instancePcd-inverse-0</div>
<svg style="position:absolute;left:1211.0px;top:101.6px" width="9" height="9" viewBox="0 0 12 12"><path d="M1 3.5h7v7.5h-7z M1 3.5l2.5-2.5h7l-2.5 2.5 M8 11l2.5-2.5v-7.5" fill="none" stroke="#8a8a8a" stroke-width="0.7"/></svg>
<div style="position:absolute;left:1221.2px;top:100.6px;width:11.6px;height:11px;background:#cce8ff;border:0.5px solid #99d1ff;box-sizing:border-box;border-radius:1px;"></div>
<svg style="position:absolute;left:1222.0px;top:101.6px" width="10" height="10" viewBox="0 0 12 12"><g stroke="#333" stroke-width="0.8" stroke-linecap="round"><path d="M1.5 3.2l1.2-1M9 3.2l1.2-1M1.5 10l1.2-1M9 10l1.2-1"/></g><g fill="#333"><circle cx="4.6" cy="3" r="0.5"/><circle cx="6.8" cy="2" r="0.5"/><circle cx="4.6" cy="9.8" r="0.5"/><circle cx="6.8" cy="8.8" r="0.5"/></g></svg>
<svg style="position:absolute;left:1233.7px;top:101.6px" width="9.5" height="9.5" viewBox="0 0 12 12"><path d="M3 1.5q3-1 6 0v9q-3 1-6 0z" fill="#fff" stroke="#222" stroke-width="0.8"/><path d="M4.3 2.2v7.6M7.7 2.2v7.6M4.3 3l1.7 3 1.7-3M4.3 9l1.7-3 1.7 3" fill="none" stroke="#222" stroke-width="0.6"/></svg>
<svg style="position:absolute;left:1245.7px;top:101.6px" width="9" height="9" viewBox="0 0 12 12"><path d="M2.5 2q3.5-1.5 7 0v8q-3.5 1.5-7 0z" fill="#80b4e8"/><path d="M2.5 2h3v8.5h-3z" fill="#c8e0f8"/><path d="M2.5 2q3.5-1.5 7 0q-3.5 1.2-7 0z" fill="#b0d4f4"/></svg>
<div style="position:absolute;left:1256.2px;top:100.6px;width:11px;height:11px;background:#cce8ff;border:0.5px solid #99d1ff;box-sizing:border-box;border-radius:1px;"></div>
<svg style="position:absolute;left:1257.7px;top:101.89999999999999px;" width="8" height="8.5" viewBox="0 0 8 8.5"><rect x="3.5" y="1" width="3.5" height="7" fill="#f4f8fc" stroke="#aaa" stroke-width="0.4"/><path d="M1.3 8.2l2.8-6.2h-1.6l0.6-1.3h3.3l-3.2 7.5z" fill="#e84050"/></svg>
<div style="position:absolute;left:1267.4px;top:100.6px;width:11.8px;height:11px;background:#cce8ff;border:0.5px solid #99d1ff;box-sizing:border-box;border-radius:1px;"></div>
<svg style="position:absolute;left:1268.9px;top:102.1px;" width="9" height="8" viewBox="0 0 9 8"><rect x="0.6" y="0.6" width="7.8" height="6.8" rx="2.4" fill="#5a5a5a"/><rect x="1.8" y="1.8" width="5.4" height="4.4" rx="1.2" fill="#a8dcb0"/><path d="M2.5 2.5l2 1.5-2 1.5zM6.5 2.5l-2 1.5 2 1.5z" fill="#3a9a4a"/></svg>
<svg style="position:absolute;left:1019.2px;top:116.6px;" width="4" height="5" viewBox="0 0 4 5"><path d="M0.5 0.5L3 2.5L0.5 4.5" fill="none" stroke="#666" stroke-width="0.7"/></svg>
<div style="position:absolute;left:1024.0px;top:114.39999999999999px;width:8.4px;height:9.2px;background:#e6e6e6;border:0.5px solid #cfcfcf;box-sizing:border-box;"></div>
<svg style="position:absolute;left:1024.4px;top:115.1px" width="7.5" height="7.5" viewBox="0 0 12 12"><ellipse cx="6" cy="6" rx="4.6" ry="3.1" fill="#3a3a3a"/><ellipse cx="6" cy="6.1" rx="3.8" ry="2.5" fill="#22e622"/><circle cx="5.6" cy="5.4" r="1.2" fill="#111"/></svg>
<div class="s" style="left:1035.0px;top:115.05px;height:9.10px;line-height:9.10px;font-size:7px;color:#444;font-weight:normal;transform:scaleX(0.917);transform-origin:0 0;-webkit-text-stroke:0.1px #444;">3</div>
<div class="s" style="left:1048.2px;top:115.05px;height:9.10px;line-height:9.10px;font-size:7px;color:#333;font-weight:normal;transform:scaleX(0.917);transform-origin:0 0;-webkit-text-stroke:0.1px #333;">20250701171018382_instance-2_model-cpfv-0</div>
<svg style="position:absolute;left:1211.0px;top:114.6px" width="9" height="9" viewBox="0 0 12 12"><path d="M1 3.5h7v7.5h-7z M1 3.5l2.5-2.5h7l-2.5 2.5 M8 11l2.5-2.5v-7.5" fill="none" stroke="#8a8a8a" stroke-width="0.7"/></svg>
<div style="position:absolute;left:1221.2px;top:113.6px;width:11.6px;height:11px;background:#cce8ff;border:0.5px solid #99d1ff;box-sizing:border-box;border-radius:1px;"></div>
<svg style="position:absolute;left:1222.0px;top:114.6px" width="10" height="10" viewBox="0 0 12 12"><g stroke="#333" stroke-width="0.8" stroke-linecap="round"><path d="M1.5 3.2l1.2-1M9 3.2l1.2-1M1.5 10l1.2-1M9 10l1.2-1"/></g><g fill="#333"><circle cx="4.6" cy="3" r="0.5"/><circle cx="6.8" cy="2" r="0.5"/><circle cx="4.6" cy="9.8" r="0.5"/><circle cx="6.8" cy="8.8" r="0.5"/></g></svg>
<svg style="position:absolute;left:1233.7px;top:114.6px" width="9.5" height="9.5" viewBox="0 0 12 12"><path d="M3 1.5q3-1 6 0v9q-3 1-6 0z" fill="#fff" stroke="#222" stroke-width="0.8"/><path d="M4.3 2.2v7.6M7.7 2.2v7.6M4.3 3l1.7 3 1.7-3M4.3 9l1.7-3 1.7 3" fill="none" stroke="#222" stroke-width="0.6"/></svg>
<svg style="position:absolute;left:1245.7px;top:114.6px" width="9" height="9" viewBox="0 0 12 12"><path d="M2.5 2q3.5-1.5 7 0v8q-3.5 1.5-7 0z" fill="#80b4e8"/><path d="M2.5 2h3v8.5h-3z" fill="#c8e0f8"/><path d="M2.5 2q3.5-1.5 7 0q-3.5 1.2-7 0z" fill="#b0d4f4"/></svg>
<div style="position:absolute;left:1256.2px;top:113.6px;width:11px;height:11px;background:#cce8ff;border:0.5px solid #99d1ff;box-sizing:border-box;border-radius:1px;"></div>
<svg style="position:absolute;left:1257.7px;top:114.89999999999999px;" width="8" height="8.5" viewBox="0 0 8 8.5"><rect x="3.5" y="1" width="3.5" height="7" fill="#f4f8fc" stroke="#aaa" stroke-width="0.4"/><path d="M1.3 8.2l2.8-6.2h-1.6l0.6-1.3h3.3l-3.2 7.5z" fill="#e84050"/></svg>
<div style="position:absolute;left:1267.4px;top:113.6px;width:11.8px;height:11px;background:#cce8ff;border:0.5px solid #99d1ff;box-sizing:border-box;border-radius:1px;"></div>
<svg style="position:absolute;left:1268.9px;top:115.1px;" width="9" height="8" viewBox="0 0 9 8"><rect x="0.6" y="0.6" width="7.8" height="6.8" rx="2.4" fill="#5a5a5a"/><rect x="1.8" y="1.8" width="5.4" height="4.4" rx="1.2" fill="#a8dcb0"/><path d="M2.5 2.5l2 1.5-2 1.5zM6.5 2.5l-2 1.5 2 1.5z" fill="#3a9a4a"/></svg>
<svg style="position:absolute;left:1019.2px;top:129.6px;" width="4" height="5" viewBox="0 0 4 5"><path d="M0.5 0.5L3 2.5L0.5 4.5" fill="none" stroke="#666" stroke-width="0.7"/></svg>
<div style="position:absolute;left:1024.0px;top:127.39999999999999px;width:8.4px;height:9.2px;background:#e6e6e6;border:0.5px solid #cfcfcf;box-sizing:border-box;"></div>
<svg style="position:absolute;left:1024.4px;top:128.1px" width="7.5" height="7.5" viewBox="0 0 12 12"><ellipse cx="6" cy="6" rx="4.6" ry="3.1" fill="#3a3a3a"/><ellipse cx="6" cy="6.1" rx="3.8" ry="2.5" fill="#22e622"/><circle cx="5.6" cy="5.4" r="1.2" fill="#111"/></svg>
<div class="s" style="left:1035.0px;top:128.05px;height:9.10px;line-height:9.10px;font-size:7px;color:#444;font-weight:normal;transform:scaleX(0.917);transform-origin:0 0;-webkit-text-stroke:0.1px #444;">4</div>
<div class="s" style="left:1048.2px;top:128.05px;height:9.10px;line-height:9.10px;font-size:7px;color:#333;font-weight:normal;transform:scaleX(0.917);transform-origin:0 0;-webkit-text-stroke:0.1px #333;">20250701171018382_instance-2_scene-cpfv-0</div>
<svg style="position:absolute;left:1211.0px;top:127.6px" width="9" height="9" viewBox="0 0 12 12"><path d="M1 3.5h7v7.5h-7z M1 3.5l2.5-2.5h7l-2.5 2.5 M8 11l2.5-2.5v-7.5" fill="none" stroke="#8a8a8a" stroke-width="0.7"/></svg>
<div style="position:absolute;left:1221.2px;top:126.6px;width:11.6px;height:11px;background:#cce8ff;border:0.5px solid #99d1ff;box-sizing:border-box;border-radius:1px;"></div>
<svg style="position:absolute;left:1222.0px;top:127.6px" width="10" height="10" viewBox="0 0 12 12"><g stroke="#333" stroke-width="0.8" stroke-linecap="round"><path d="M1.5 3.2l1.2-1M9 3.2l1.2-1M1.5 10l1.2-1M9 10l1.2-1"/></g><g fill="#333"><circle cx="4.6" cy="3" r="0.5"/><circle cx="6.8" cy="2" r="0.5"/><circle cx="4.6" cy="9.8" r="0.5"/><circle cx="6.8" cy="8.8" r="0.5"/></g></svg>
<svg style="position:absolute;left:1233.7px;top:127.6px" width="9.5" height="9.5" viewBox="0 0 12 12"><path d="M3 1.5q3-1 6 0v9q-3 1-6 0z" fill="#fff" stroke="#222" stroke-width="0.8"/><path d="M4.3 2.2v7.6M7.7 2.2v7.6M4.3 3l1.7 3 1.7-3M4.3 9l1.7-3 1.7 3" fill="none" stroke="#222" stroke-width="0.6"/></svg>
<svg style="position:absolute;left:1245.7px;top:127.6px" width="9" height="9" viewBox="0 0 12 12"><path d="M2.5 2q3.5-1.5 7 0v8q-3.5 1.5-7 0z" fill="#80b4e8"/><path d="M2.5 2h3v8.5h-3z" fill="#c8e0f8"/><path d="M2.5 2q3.5-1.5 7 0q-3.5 1.2-7 0z" fill="#b0d4f4"/></svg>
<div style="position:absolute;left:1256.2px;top:126.6px;width:11px;height:11px;background:#cce8ff;border:0.5px solid #99d1ff;box-sizing:border-box;border-radius:1px;"></div>
<svg style="position:absolute;left:1257.7px;top:127.89999999999999px;" width="8" height="8.5" viewBox="0 0 8 8.5"><rect x="3.5" y="1" width="3.5" height="7" fill="#f4f8fc" stroke="#aaa" stroke-width="0.4"/><path d="M1.3 8.2l2.8-6.2h-1.6l0.6-1.3h3.3l-3.2 7.5z" fill="#e84050"/></svg>
<div style="position:absolute;left:1267.4px;top:126.6px;width:11.8px;height:11px;background:#cce8ff;border:0.5px solid #99d1ff;box-sizing:border-box;border-radius:1px;"></div>
<svg style="position:absolute;left:1268.9px;top:128.1px;" width="9" height="8" viewBox="0 0 9 8"><rect x="0.6" y="0.6" width="7.8" height="6.8" rx="2.4" fill="#5a5a5a"/><rect x="1.8" y="1.8" width="5.4" height="4.4" rx="1.2" fill="#a8dcb0"/><path d="M2.5 2.5l2 1.5-2 1.5zM6.5 2.5l-2 1.5 2 1.5z" fill="#3a9a4a"/></svg>
<div style="position:absolute;left:1033.9px;top:138.6px;width:246.09999999999997px;height:13px;background:#dcdc00;"></div>
<svg style="position:absolute;left:1019.2px;top:142.6px;" width="4" height="5" viewBox="0 0 4 5"><path d="M0.5 0.5L3 2.5L0.5 4.5" fill="none" stroke="#666" stroke-width="0.7"/></svg>
<div style="position:absolute;left:1024.0px;top:140.4px;width:8.4px;height:9.2px;background:#a8c8e8;border:0.5px solid #cfcfcf;box-sizing:border-box;"></div>
<svg style="position:absolute;left:1024.4px;top:141.1px" width="7.5" height="7.5" viewBox="0 0 12 12"><ellipse cx="6" cy="6" rx="4.6" ry="3.1" fill="#3a3a3a"/><ellipse cx="6" cy="6.1" rx="3.8" ry="2.5" fill="#22e622"/><circle cx="5.6" cy="5.4" r="1.2" fill="#111"/></svg>
<div class="s" style="left:1035.0px;top:141.05px;height:9.10px;line-height:9.10px;font-size:7px;color:#3c3ca8;font-weight:normal;transform:scaleX(0.917);transform-origin:0 0;-webkit-text-stroke:0.1px #3c3ca8;">5</div>
<div class="s" style="left:1048.2px;top:141.05px;height:9.10px;line-height:9.10px;font-size:7px;color:#3c3ca8;font-weight:normal;transform:scaleX(0.917);transform-origin:0 0;-webkit-text-stroke:0.1px #3c3ca8;">20250701171018382_instance-pcd-0</div>
<svg style="position:absolute;left:1211.0px;top:140.6px" width="9" height="9" viewBox="0 0 12 12"><path d="M1 3.5h7v7.5h-7z M1 3.5l2.5-2.5h7l-2.5 2.5 M8 11l2.5-2.5v-7.5" fill="none" stroke="#8a8a8a" stroke-width="0.7"/></svg>
<div style="position:absolute;left:1221.2px;top:139.6px;width:11.6px;height:11px;background:#cce8ff;border:0.5px solid #99d1ff;box-sizing:border-box;border-radius:1px;"></div>
<svg style="position:absolute;left:1222.0px;top:140.6px" width="10" height="10" viewBox="0 0 12 12"><g stroke="#333" stroke-width="0.8" stroke-linecap="round"><path d="M1.5 3.2l1.2-1M9 3.2l1.2-1M1.5 10l1.2-1M9 10l1.2-1"/></g><g fill="#333"><circle cx="4.6" cy="3" r="0.5"/><circle cx="6.8" cy="2" r="0.5"/><circle cx="4.6" cy="9.8" r="0.5"/><circle cx="6.8" cy="8.8" r="0.5"/></g></svg>
<svg style="position:absolute;left:1233.7px;top:140.6px" width="9.5" height="9.5" viewBox="0 0 12 12"><path d="M3 1.5q3-1 6 0v9q-3 1-6 0z" fill="#fff" stroke="#222" stroke-width="0.8"/><path d="M4.3 2.2v7.6M7.7 2.2v7.6M4.3 3l1.7 3 1.7-3M4.3 9l1.7-3 1.7 3" fill="none" stroke="#222" stroke-width="0.6"/></svg>
<svg style="position:absolute;left:1245.7px;top:140.6px" width="9" height="9" viewBox="0 0 12 12"><path d="M2.5 2q3.5-1.5 7 0v8q-3.5 1.5-7 0z" fill="#80b4e8"/><path d="M2.5 2h3v8.5h-3z" fill="#c8e0f8"/><path d="M2.5 2q3.5-1.5 7 0q-3.5 1.2-7 0z" fill="#b0d4f4"/></svg>
<div style="position:absolute;left:1256.2px;top:139.6px;width:11px;height:11px;background:#cce8ff;border:0.5px solid #99d1ff;box-sizing:border-box;border-radius:1px;"></div>
<svg style="position:absolute;left:1257.7px;top:140.9px;" width="8" height="8.5" viewBox="0 0 8 8.5"><rect x="3.5" y="1" width="3.5" height="7" fill="#f4f8fc" stroke="#aaa" stroke-width="0.4"/><path d="M1.3 8.2l2.8-6.2h-1.6l0.6-1.3h3.3l-3.2 7.5z" fill="#e84050"/></svg>
<div style="position:absolute;left:1267.4px;top:139.6px;width:11.8px;height:11px;background:#cce8ff;border:0.5px solid #99d1ff;box-sizing:border-box;border-radius:1px;"></div>
<svg style="position:absolute;left:1268.9px;top:141.1px;" width="9" height="8" viewBox="0 0 9 8"><rect x="0.6" y="0.6" width="7.8" height="6.8" rx="2.4" fill="#5a5a5a"/><rect x="1.8" y="1.8" width="5.4" height="4.4" rx="1.2" fill="#a8dcb0"/><path d="M2.5 2.5l2 1.5-2 1.5zM6.5 2.5l-2 1.5 2 1.5z" fill="#3a9a4a"/></svg>
<svg style="position:absolute;left:1019.2px;top:155.6px;" width="4" height="5" viewBox="0 0 4 5"><path d="M0.5 0.5L3 2.5L0.5 4.5" fill="none" stroke="#666" stroke-width="0.7"/></svg>
<div style="position:absolute;left:1024.0px;top:153.4px;width:8.4px;height:9.2px;background:#e6e6e6;border:0.5px solid #cfcfcf;box-sizing:border-box;"></div>
<svg style="position:absolute;left:1024.4px;top:154.1px" width="7.5" height="7.5" viewBox="0 0 12 12"><ellipse cx="6" cy="6" rx="4.6" ry="3.1" fill="#3a3a3a"/><ellipse cx="6" cy="6.1" rx="3.8" ry="2.5" fill="#22e622"/><circle cx="5.6" cy="5.4" r="1.2" fill="#111"/></svg>
<div class="s" style="left:1035.0px;top:154.05px;height:9.10px;line-height:9.10px;font-size:7px;color:#444;font-weight:normal;transform:scaleX(0.917);transform-origin:0 0;-webkit-text-stroke:0.1px #444;">6</div>
<div class="s" style="left:1048.2px;top:154.05px;height:9.10px;line-height:9.10px;font-size:7px;color:#333;font-weight:normal;transform:scaleX(0.917);transform-origin:0 0;-webkit-text-stroke:0.1px #333;">20250701171018382_instance-pcd-1</div>
<svg style="position:absolute;left:1211.0px;top:153.6px" width="9" height="9" viewBox="0 0 12 12"><path d="M1 3.5h7v7.5h-7z M1 3.5l2.5-2.5h7l-2.5 2.5 M8 11l2.5-2.5v-7.5" fill="none" stroke="#8a8a8a" stroke-width="0.7"/></svg>
<div style="position:absolute;left:1221.2px;top:152.6px;width:11.6px;height:11px;background:#cce8ff;border:0.5px solid #99d1ff;box-sizing:border-box;border-radius:1px;"></div>
<svg style="position:absolute;left:1222.0px;top:153.6px" width="10" height="10" viewBox="0 0 12 12"><g stroke="#333" stroke-width="0.8" stroke-linecap="round"><path d="M1.5 3.2l1.2-1M9 3.2l1.2-1M1.5 10l1.2-1M9 10l1.2-1"/></g><g fill="#333"><circle cx="4.6" cy="3" r="0.5"/><circle cx="6.8" cy="2" r="0.5"/><circle cx="4.6" cy="9.8" r="0.5"/><circle cx="6.8" cy="8.8" r="0.5"/></g></svg>
<svg style="position:absolute;left:1233.7px;top:153.6px" width="9.5" height="9.5" viewBox="0 0 12 12"><path d="M3 1.5q3-1 6 0v9q-3 1-6 0z" fill="#fff" stroke="#222" stroke-width="0.8"/><path d="M4.3 2.2v7.6M7.7 2.2v7.6M4.3 3l1.7 3 1.7-3M4.3 9l1.7-3 1.7 3" fill="none" stroke="#222" stroke-width="0.6"/></svg>
<svg style="position:absolute;left:1245.7px;top:153.6px" width="9" height="9" viewBox="0 0 12 12"><path d="M2.5 2q3.5-1.5 7 0v8q-3.5 1.5-7 0z" fill="#80b4e8"/><path d="M2.5 2h3v8.5h-3z" fill="#c8e0f8"/><path d="M2.5 2q3.5-1.5 7 0q-3.5 1.2-7 0z" fill="#b0d4f4"/></svg>
<div style="position:absolute;left:1256.2px;top:152.6px;width:11px;height:11px;background:#cce8ff;border:0.5px solid #99d1ff;box-sizing:border-box;border-radius:1px;"></div>
<svg style="position:absolute;left:1257.7px;top:153.9px;" width="8" height="8.5" viewBox="0 0 8 8.5"><rect x="3.5" y="1" width="3.5" height="7" fill="#f4f8fc" stroke="#aaa" stroke-width="0.4"/><path d="M1.3 8.2l2.8-6.2h-1.6l0.6-1.3h3.3l-3.2 7.5z" fill="#e84050"/></svg>
<div style="position:absolute;left:1267.4px;top:152.6px;width:11.8px;height:11px;background:#cce8ff;border:0.5px solid #99d1ff;box-sizing:border-box;border-radius:1px;"></div>
<svg style="position:absolute;left:1268.9px;top:154.1px;" width="9" height="8" viewBox="0 0 9 8"><rect x="0.6" y="0.6" width="7.8" height="6.8" rx="2.4" fill="#5a5a5a"/><rect x="1.8" y="1.8" width="5.4" height="4.4" rx="1.2" fill="#a8dcb0"/><path d="M2.5 2.5l2 1.5-2 1.5zM6.5 2.5l-2 1.5 2 1.5z" fill="#3a9a4a"/></svg>
<svg style="position:absolute;left:1019.2px;top:168.6px;" width="4" height="5" viewBox="0 0 4 5"><path d="M0.5 0.5L3 2.5L0.5 4.5" fill="none" stroke="#666" stroke-width="0.7"/></svg>
<div style="position:absolute;left:1024.0px;top:166.4px;width:8.4px;height:9.2px;background:#e6e6e6;border:0.5px solid #cfcfcf;box-sizing:border-box;"></div>
<svg style="position:absolute;left:1024.4px;top:167.1px" width="7.5" height="7.5" viewBox="0 0 12 12"><ellipse cx="6" cy="6" rx="4.6" ry="3.1" fill="#3a3a3a"/><ellipse cx="6" cy="6.1" rx="3.8" ry="2.5" fill="#22e622"/><circle cx="5.6" cy="5.4" r="1.2" fill="#111"/></svg>
<div class="s" style="left:1035.0px;top:167.05px;height:9.10px;line-height:9.10px;font-size:7px;color:#444;font-weight:normal;transform:scaleX(0.917);transform-origin:0 0;-webkit-text-stroke:0.1px #444;">7</div>
<div class="s" style="left:1048.2px;top:167.05px;height:9.10px;line-height:9.10px;font-size:7px;color:#333;font-weight:normal;transform:scaleX(0.917);transform-origin:0 0;-webkit-text-stroke:0.1px #333;">20250701171018382_instance-pcd-2</div>
<svg style="position:absolute;left:1211.0px;top:166.6px" width="9" height="9" viewBox="0 0 12 12"><path d="M1 3.5h7v7.5h-7z M1 3.5l2.5-2.5h7l-2.5 2.5 M8 11l2.5-2.5v-7.5" fill="none" stroke="#8a8a8a" stroke-width="0.7"/></svg>
<div style="position:absolute;left:1221.2px;top:165.6px;width:11.6px;height:11px;background:#cce8ff;border:0.5px solid #99d1ff;box-sizing:border-box;border-radius:1px;"></div>
<svg style="position:absolute;left:1222.0px;top:166.6px" width="10" height="10" viewBox="0 0 12 12"><g stroke="#333" stroke-width="0.8" stroke-linecap="round"><path d="M1.5 3.2l1.2-1M9 3.2l1.2-1M1.5 10l1.2-1M9 10l1.2-1"/></g><g fill="#333"><circle cx="4.6" cy="3" r="0.5"/><circle cx="6.8" cy="2" r="0.5"/><circle cx="4.6" cy="9.8" r="0.5"/><circle cx="6.8" cy="8.8" r="0.5"/></g></svg>
<svg style="position:absolute;left:1233.7px;top:166.6px" width="9.5" height="9.5" viewBox="0 0 12 12"><path d="M3 1.5q3-1 6 0v9q-3 1-6 0z" fill="#fff" stroke="#222" stroke-width="0.8"/><path d="M4.3 2.2v7.6M7.7 2.2v7.6M4.3 3l1.7 3 1.7-3M4.3 9l1.7-3 1.7 3" fill="none" stroke="#222" stroke-width="0.6"/></svg>
<svg style="position:absolute;left:1245.7px;top:166.6px" width="9" height="9" viewBox="0 0 12 12"><path d="M2.5 2q3.5-1.5 7 0v8q-3.5 1.5-7 0z" fill="#80b4e8"/><path d="M2.5 2h3v8.5h-3z" fill="#c8e0f8"/><path d="M2.5 2q3.5-1.5 7 0q-3.5 1.2-7 0z" fill="#b0d4f4"/></svg>
<div style="position:absolute;left:1256.2px;top:165.6px;width:11px;height:11px;background:#cce8ff;border:0.5px solid #99d1ff;box-sizing:border-box;border-radius:1px;"></div>
<svg style="position:absolute;left:1257.7px;top:166.9px;" width="8" height="8.5" viewBox="0 0 8 8.5"><rect x="3.5" y="1" width="3.5" height="7" fill="#f4f8fc" stroke="#aaa" stroke-width="0.4"/><path d="M1.3 8.2l2.8-6.2h-1.6l0.6-1.3h3.3l-3.2 7.5z" fill="#e84050"/></svg>
<div style="position:absolute;left:1267.4px;top:165.6px;width:11.8px;height:11px;background:#cce8ff;border:0.5px solid #99d1ff;box-sizing:border-box;border-radius:1px;"></div>
<svg style="position:absolute;left:1268.9px;top:167.1px;" width="9" height="8" viewBox="0 0 9 8"><rect x="0.6" y="0.6" width="7.8" height="6.8" rx="2.4" fill="#5a5a5a"/><rect x="1.8" y="1.8" width="5.4" height="4.4" rx="1.2" fill="#a8dcb0"/><path d="M2.5 2.5l2 1.5-2 1.5zM6.5 2.5l-2 1.5 2 1.5z" fill="#3a9a4a"/></svg>
<div style="position:absolute;left:1018.2px;top:261.4px;width:12.8px;height:7.4px;background:#fdfdfd;border:0.6px solid #d0d0d0;border-radius:2px;box-sizing:border-box;"></div>
<div class="m" style="left:1022.8000000000001px;top:261.30px;height:7.80px;line-height:7.80px;font-size:6px;color:#111;font-weight:bold;">1</div>
<div style="position:absolute;left:1035.6000000000001px;top:261.4px;width:12.8px;height:7.4px;background:#fdfdfd;border:0.6px solid #d0d0d0;border-radius:2px;box-sizing:border-box;"></div>
<div class="m" style="left:1040.2px;top:261.30px;height:7.80px;line-height:7.80px;font-size:6px;color:#111;font-weight:bold;">2</div>
<div style="position:absolute;left:1053.0px;top:261.4px;width:12.8px;height:7.4px;background:#fdfdfd;border:0.6px solid #d0d0d0;border-radius:2px;box-sizing:border-box;"></div>
<div class="m" style="left:1057.6px;top:261.30px;height:7.80px;line-height:7.80px;font-size:6px;color:#111;font-weight:bold;">3</div>
<div style="position:absolute;left:1069.6000000000001px;top:261.4px;width:12.8px;height:7.4px;background:#fdfdfd;border:0.6px solid #d0d0d0;border-radius:2px;box-sizing:border-box;"></div>
<div class="m" style="left:1074.2px;top:261.30px;height:7.80px;line-height:7.80px;font-size:6px;color:#111;font-weight:bold;">4</div>
<div style="position:absolute;left:1214.6000000000001px;top:261.4px;width:12.8px;height:7.4px;background:#fdfdfd;border:0.6px solid #d0d0d0;border-radius:2px;box-sizing:border-box;"></div>
<div class="m" style="left:1219.2px;top:261.30px;height:7.80px;line-height:7.80px;font-size:6px;color:#111;font-weight:bold;">1</div>
<div style="position:absolute;left:1231.6000000000001px;top:261.4px;width:12.8px;height:7.4px;background:#fdfdfd;border:0.6px solid #d0d0d0;border-radius:2px;box-sizing:border-box;"></div>
<div class="m" style="left:1236.2px;top:261.30px;height:7.80px;line-height:7.80px;font-size:6px;color:#111;font-weight:bold;">2</div>
<div style="position:absolute;left:1248.6000000000001px;top:261.4px;width:12.8px;height:7.4px;background:#fdfdfd;border:0.6px solid #d0d0d0;border-radius:2px;box-sizing:border-box;"></div>
<div class="m" style="left:1253.2px;top:261.30px;height:7.80px;line-height:7.80px;font-size:6px;color:#111;font-weight:bold;">3</div>
<div style="position:absolute;left:1265.6000000000001px;top:261.4px;width:12.8px;height:7.4px;background:#fdfdfd;border:0.6px solid #d0d0d0;border-radius:2px;box-sizing:border-box;"></div>
<div class="m" style="left:1270.2px;top:261.30px;height:7.80px;line-height:7.80px;font-size:6px;color:#111;font-weight:bold;">4</div>
<div style="position:absolute;left:1017.6px;top:276.8px;width:263.2px;height:126px;border:0.6px solid #dcdcdc;box-sizing:border-box;"></div>
<div style="position:absolute;left:1022.2px;top:272.0px;width:150px;height:9px;background:#f0f0f0;"></div>
<div class="m" style="left:1023.6px;top:273.03px;height:8.75px;line-height:8.75px;font-size:6.73px;color:#222;font-weight:normal;">20250701171018382_instance-pcd-0.ply</div>
<div style="position:absolute;left:1023.6px;top:286.5px;width:22.1px;height:11px;background:#e9e9e9;border:0.5px solid #dadada;box-sizing:border-box;"></div>
<svg style="position:absolute;left:1030.1px;top:288.0px" width="8.5" height="8.5" viewBox="0 0 12 12"><path d="M1 3.5h7v7.5h-7z M1 3.5l2.5-2.5h7l-2.5 2.5 M8 11l2.5-2.5v-7.5" fill="none" stroke="#8a8a8a" stroke-width="0.7"/></svg>
<div style="position:absolute;left:1045.7px;top:286.5px;width:22.1px;height:11px;background:#fafafa;border:0.5px solid #dadada;box-sizing:border-box;"></div>
<svg style="position:absolute;left:1052.2px;top:288.0px" width="8.5" height="8.5" viewBox="0 0 12 12"><g stroke="#333" stroke-width="0.8" stroke-linecap="round"><path d="M1.5 3.2l1.2-1M9 3.2l1.2-1M1.5 10l1.2-1M9 10l1.2-1"/></g><g fill="#333"><circle cx="4.6" cy="3" r="0.5"/><circle cx="6.8" cy="2" r="0.5"/><circle cx="4.6" cy="9.8" r="0.5"/><circle cx="6.8" cy="8.8" r="0.5"/></g></svg>
<div style="position:absolute;left:1067.8px;top:286.5px;width:22.1px;height:11px;background:#e9e9e9;border:0.5px solid #dadada;box-sizing:border-box;"></div>
<svg style="position:absolute;left:1074.3px;top:288.0px" width="8.5" height="8.5" viewBox="0 0 12 12"><path d="M3 1.5q3-1 6 0v9q-3 1-6 0z" fill="#fff" stroke="#222" stroke-width="0.8"/><path d="M4.3 2.2v7.6M7.7 2.2v7.6M4.3 3l1.7 3 1.7-3M4.3 9l1.7-3 1.7 3" fill="none" stroke="#222" stroke-width="0.6"/></svg>
<div style="position:absolute;left:1089.9px;top:286.5px;width:22.1px;height:11px;background:#e9e9e9;border:0.5px solid #dadada;box-sizing:border-box;"></div>
<svg style="position:absolute;left:1096.4px;top:288.0px" width="8.5" height="8.5" viewBox="0 0 12 12"><path d="M2.5 2q3.5-1.5 7 0v8q-3.5 1.5-7 0z" fill="#a8cdf0"/><path d="M4.5 1.6h2.5v9.2h-2.5z" fill="#f2f8fe"/><path d="M8 1.8h1.5v8.5h-1.5z" fill="#80b4e8"/></svg>
<div style="position:absolute;left:1112.0px;top:286.5px;width:22.1px;height:11px;background:#e9e9e9;border:0.5px solid #dadada;box-sizing:border-box;"></div>
<svg style="position:absolute;left:1119.5px;top:288.5px;" width="8" height="8.5" viewBox="0 0 8 8.5"><rect x="1" y="1" width="6" height="7" fill="#e0e0e0" stroke="#999" stroke-width="0.4"/><path d="M1.5 8l3-7h2l-3 7z" fill="#e04050"/></svg>
<div style="position:absolute;left:1134.1px;top:286.5px;width:22.1px;height:11px;background:#e9e9e9;border:0.5px solid #dadada;box-sizing:border-box;"></div>
<svg style="position:absolute;left:1141.1px;top:288.5px;" width="9" height="8" viewBox="0 0 9 8"><rect x="0.5" y="0.5" width="8" height="7" rx="2" fill="#555"/><rect x="2" y="2" width="5" height="4" rx="1" fill="#7ccf8a"/></svg>
<div style="position:absolute;left:1022.9000000000001px;top:297.5px;width:250.99999999999997px;height:85.8px;border:0.6px solid #dedede;box-sizing:border-box;"></div>
<div class="m" style="left:1027.9px;top:305.02px;height:9.75px;line-height:9.75px;font-size:7.5px;color:#111;font-weight:bold;">Shading</div>
<div class="m" style="left:1027.9px;top:320.73px;height:9.75px;line-height:9.75px;font-size:7.5px;color:#111;font-weight:bold;">Color</div>
<div class="m" style="left:1027.9px;top:357.52px;height:9.75px;line-height:9.75px;font-size:7.5px;color:#111;font-weight:bold;">Point Size</div>
<div style="position:absolute;left:1147.2px;top:303.8px;width:28px;height:9.7px;background:#cce8ff;border:0.6px solid #99d1ff;box-sizing:border-box;border-radius:1px;"></div>
<div style="position:absolute;left:1147.2px;top:319.1px;width:28px;height:9.7px;background:#cce8ff;border:0.6px solid #99d1ff;box-sizing:border-box;border-radius:1px;"></div>
<div class="m" style="left:1152.7px;top:305.33px;height:8.75px;line-height:8.75px;font-size:6.73px;color:#111;font-weight:normal;">Vert</div>
<div class="m" style="left:1152.7px;top:320.83px;height:8.75px;line-height:8.75px;font-size:6.73px;color:#111;font-weight:normal;">Vert</div>
<div class="m" style="left:1180.5px;top:305.43px;height:8.75px;line-height:8.75px;font-size:6.73px;color:#111;font-weight:normal;">Dot Decorator</div>
<div class="m" style="left:1244.2px;top:305.43px;height:8.75px;line-height:8.75px;font-size:6.73px;color:#111;font-weight:normal;">None</div>
<div class="m" style="left:1180.5px;top:321.23px;height:8.75px;line-height:8.75px;font-size:6.73px;color:#111;font-weight:normal;">Mesh</div>
<div class="m" style="left:1208.2px;top:321.23px;height:8.75px;line-height:8.75px;font-size:6.73px;color:#111;font-weight:normal;">User-Def</div>
<div style="position:absolute;left:1247.2px;top:320.5px;width:7.4px;height:7.5px;background:#7e9a3e;border:0.5px solid #666;box-sizing:border-box;"></div>
<div style="position:absolute;left:1185.2px;top:359.0px;width:43px;height:1.6px;background:#dcdcdc;border-radius:1px;"></div>
<div style="position:absolute;left:1190.2px;top:355.0px;width:6px;height:10.5px;background:#0f78d7;border-radius:1px;"></div>
<div class="m" style="left:1156.2px;top:389.03px;height:8.75px;line-height:8.75px;font-size:6.73px;color:#111;font-weight:normal;">apply to all visible layers</div>
<div style="position:absolute;left:1268.2px;top:389.5px;width:7px;height:6.5px;background:#fff;border:0.6px solid #333;box-sizing:border-box;border-radius:1px;"></div>
<div style="position:absolute;left:1017.7px;top:412.5px;width:262.79999999999995px;height:91.0px;background:#fff;border-bottom:0.8px solid #a0a0a0;box-sizing:border-box;"></div>
<div style="position:absolute;left:1272.5px;top:412.5px;width:8px;height:90.0px;background:#f0f0f0;"></div>
<div style="position:absolute;left:1276.0px;top:473.5px;width:1px;height:22px;background:#8a8a8a;"></div>
<div class="m" style="left:1020.1px;top:413.10px;height:7.00px;line-height:7.00px;font-size:6.73px;color:#7f7f7f;font-weight:normal;">PickLight/20250701171018382/Builder/pose/input/</div>
<div class="m" style="left:1020.1px;top:419.67px;height:7.00px;line-height:7.00px;font-size:6.73px;color:#7f7f7f;font-weight:normal;">20250701171018382_instance-pcd-0.ply in 53 msec</div>
<div class="m" style="left:1020.1px;top:426.24px;height:7.00px;line-height:7.00px;font-size:6.73px;color:#7f7f7f;font-weight:normal;">All files opened in 54 msec</div>
<div class="m" style="left:1020.1px;top:432.81px;height:7.00px;line-height:7.00px;font-size:6.73px;color:#7f7f7f;font-weight:normal;">Opened mesh C:/Users/dex/Documents/PickWiz/new_project/data/</div>
<div class="m" style="left:1020.1px;top:439.38px;height:7.00px;line-height:7.00px;font-size:6.73px;color:#7f7f7f;font-weight:normal;">PickLight/20250701171018382/Builder/pose/input/</div>
<div class="m" style="left:1020.1px;top:445.95px;height:7.00px;line-height:7.00px;font-size:6.73px;color:#7f7f7f;font-weight:normal;">20250701171018382_instance-pcd-1.ply in 18 msec</div>
<div class="m" style="left:1020.1px;top:452.52px;height:7.00px;line-height:7.00px;font-size:6.73px;color:#7f7f7f;font-weight:normal;">All files opened in 18 msec</div>
<div class="m" style="left:1020.1px;top:459.09px;height:7.00px;line-height:7.00px;font-size:6.73px;color:#7f7f7f;font-weight:normal;">Opened mesh C:/Users/dex/Documents/PickWiz/new_project/data/</div>
<div class="m" style="left:1020.1px;top:465.66px;height:7.00px;line-height:7.00px;font-size:6.73px;color:#7f7f7f;font-weight:normal;">PickLight/20250701171018382/Builder/pose/input/</div>
<div class="m" style="left:1020.1px;top:472.23px;height:7.00px;line-height:7.00px;font-size:6.73px;color:#7f7f7f;font-weight:normal;">20250701171018382_instance-pcd-2.ply in 18 msec</div>
<div class="m" style="left:1020.1px;top:479.60px;height:7.00px;line-height:7.00px;font-size:6.73px;color:#7f7f7f;font-weight:normal;">All files opened in 19 msec</div>
<div style="position:absolute;left:892.8px;top:511.25px;width:207.1500000000001px;height:12.5px;background:#e6e6e6;border:0.6px solid #cfcfcf;box-sizing:border-box;"></div>
<div style="position:absolute;left:1122.2px;top:511.0px;width:151.6px;height:13px;background:#cdcdcd;border:0.8px solid #888;box-sizing:border-box;"></div>
<div style="position:absolute;left:1123.0px;top:511.8px;width:82.6px;height:11.4px;background:#7aba7a;"></div>
<div style="position:absolute;left:663.2px;top:523.5px;width:621.8px;height:1.5px;background:#fafafa;"></div>
<div class="m" style="left:1159.2px;top:513.98px;height:8.84px;line-height:8.84px;font-size:6.8px;color:#111;font-weight:bold;transform:scaleX(0.95);transform-origin:0 0;">Mem 55% 3380/6144 MB</div>
<div style="position:absolute;left:655.6px;top:60px;width:3.8px;height:443px;background:#dadada;"></div>
<div style="position:absolute;left:663.2px;top:57.5px;width:0.9px;height:452px;background:rgba(255,255,255,0.28);"></div>
<svg style="position:absolute;left:655.5px;top:-1px" width="13" height="12"><circle cx="6.4" cy="6" r="5.4" fill="#e8b818"/><text x="6.4" y="8.6" font-size="7.5" font-weight="bold" text-anchor="middle" fill="#222" font-family="Liberation Sans">Y</text></svg>
</body></html>
